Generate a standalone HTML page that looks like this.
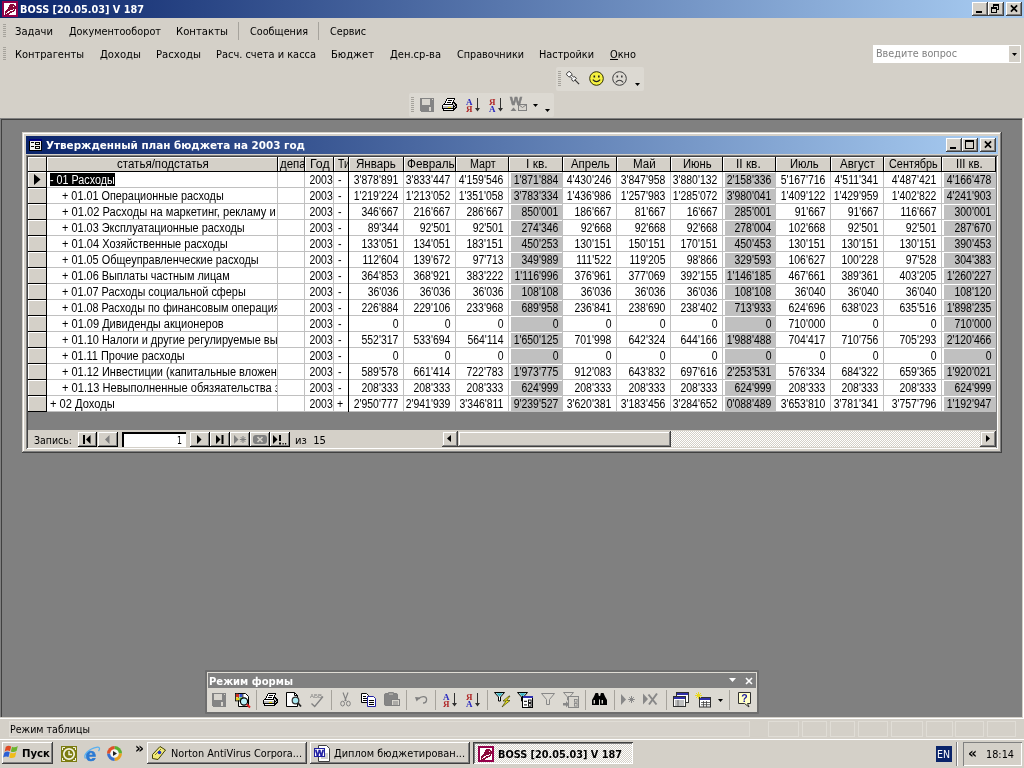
<!DOCTYPE html>
<html lang="ru"><head><meta charset="utf-8"><title>BOSS [20.05.03] V 187</title>
<style>
html,body{margin:0;padding:0}
body{width:1024px;height:768px;overflow:hidden;background:#d4d0c8;position:relative;font-family:"DejaVu Sans Condensed","Liberation Sans",sans-serif;font-size:11px;color:#000}
#root{position:absolute;left:0;top:0;width:1024px;height:768px;overflow:hidden;will-change:transform}
div{position:absolute;box-sizing:border-box;white-space:pre}
svg{position:absolute;overflow:visible}
.t,.tb,.g{height:14px;line-height:14px}
.t{font-family:"DejaVu Sans Condensed","Liberation Sans",sans-serif;font-size:11px}
.tb{font-family:"DejaVu Sans Condensed","Liberation Sans",sans-serif;font-size:11px;font-weight:bold}
.g{font-family:"Liberation Sans",sans-serif;font-size:12px;transform-origin:0 0}
.gr{transform-origin:100% 0}
.raised{background:#d4d0c8;box-shadow:inset -1px -1px 0 #404040,inset 1px 1px 0 #fff,inset -2px -2px 0 #808080}
.btn{background:#d4d0c8;box-shadow:inset -1px -1px 0 #000,inset 1px 1px 0 #fff,inset -2px -2px 0 #808080}
.sb{background:#d4d0c8;box-shadow:inset -1px -1px 0 #404040,inset 1px 1px 0 #d4d0c8,inset -2px -2px 0 #808080,inset 2px 2px 0 #fff}
.hd{background:#d4d0c8;box-shadow:inset 1px 1px 0 #fff;overflow:hidden}
.sunk{box-shadow:inset 1px 1px 0 #808080,inset -1px -1px 0 #fff}
.cell{overflow:hidden}
.grad{background:linear-gradient(90deg,#0a246a 0,#a6caf0 98%)}
.dith{background:repeating-conic-gradient(#fff 0 25%,#d4d0c8 0 50%) 0 0/2px 2px}
</style></head>
<body><div id="root">
<div class="grad" style="left:0px;top:0px;width:1024px;height:18px;"></div>
<div class="tb" style="left:19.5px;top:3px;transform-origin:0 0;transform:scaleX(0.9822);color:#fff;">BOSS [20.05.03] V 187</div>
<svg style="left:2px;top:1px" width="16" height="16" viewBox="0 0 16 16" shape-rendering="crispEdges"><rect x="0" y="0" width="16" height="1" fill="#95004a"/><rect x="0" y="1" width="16" height="1" fill="#95004a"/><rect x="0" y="2" width="2" height="1" fill="#95004a"/><rect x="2" y="2" width="12" height="1" fill="#fff"/><rect x="14" y="2" width="2" height="1" fill="#95004a"/><rect x="0" y="3" width="2" height="1" fill="#95004a"/><rect x="2" y="3" width="6" height="1" fill="#fff"/><rect x="8" y="3" width="4" height="1" fill="#8a0a3a"/><rect x="12" y="3" width="2" height="1" fill="#fff"/><rect x="14" y="3" width="2" height="1" fill="#95004a"/><rect x="0" y="4" width="2" height="1" fill="#95004a"/><rect x="2" y="4" width="5" height="1" fill="#fff"/><rect x="7" y="4" width="6" height="1" fill="#8a0a3a"/><rect x="13" y="4" width="1" height="1" fill="#fff"/><rect x="14" y="4" width="2" height="1" fill="#95004a"/><rect x="0" y="5" width="2" height="1" fill="#95004a"/><rect x="2" y="5" width="5" height="1" fill="#fff"/><rect x="7" y="5" width="4" height="1" fill="#8a0a3a"/><rect x="11" y="5" width="1" height="1" fill="#fff"/><rect x="12" y="5" width="2" height="1" fill="#8a0a3a"/><rect x="14" y="5" width="2" height="1" fill="#95004a"/><rect x="0" y="6" width="2" height="1" fill="#95004a"/><rect x="2" y="6" width="4" height="1" fill="#fff"/><rect x="6" y="6" width="8" height="1" fill="#8a0a3a"/><rect x="14" y="6" width="2" height="1" fill="#95004a"/><rect x="0" y="7" width="2" height="1" fill="#95004a"/><rect x="2" y="7" width="4" height="1" fill="#fff"/><rect x="6" y="7" width="8" height="1" fill="#8a0a3a"/><rect x="14" y="7" width="2" height="1" fill="#95004a"/><rect x="0" y="8" width="2" height="1" fill="#95004a"/><rect x="2" y="8" width="3" height="1" fill="#fff"/><rect x="5" y="8" width="6" height="1" fill="#8a0a3a"/><rect x="11" y="8" width="1" height="1" fill="#fff"/><rect x="12" y="8" width="1" height="1" fill="#8a0a3a"/><rect x="13" y="8" width="1" height="1" fill="#fff"/><rect x="14" y="8" width="2" height="1" fill="#95004a"/><rect x="0" y="9" width="2" height="1" fill="#95004a"/><rect x="2" y="9" width="2" height="1" fill="#fff"/><rect x="4" y="9" width="4" height="1" fill="#8a0a3a"/><rect x="8" y="9" width="3" height="1" fill="#fff"/><rect x="11" y="9" width="2" height="1" fill="#8a0a3a"/><rect x="13" y="9" width="1" height="1" fill="#fff"/><rect x="14" y="9" width="2" height="1" fill="#95004a"/><rect x="0" y="10" width="2" height="1" fill="#95004a"/><rect x="2" y="10" width="1" height="1" fill="#fff"/><rect x="3" y="10" width="3" height="1" fill="#8a0a3a"/><rect x="6" y="10" width="2" height="1" fill="#fff"/><rect x="8" y="10" width="4" height="1" fill="#8a0a3a"/><rect x="12" y="10" width="2" height="1" fill="#fff"/><rect x="14" y="10" width="2" height="1" fill="#95004a"/><rect x="0" y="11" width="2" height="1" fill="#95004a"/><rect x="2" y="11" width="1" height="1" fill="#fff"/><rect x="3" y="11" width="2" height="1" fill="#8a0a3a"/><rect x="5" y="11" width="2" height="1" fill="#fff"/><rect x="7" y="11" width="3" height="1" fill="#8a0a3a"/><rect x="10" y="11" width="4" height="1" fill="#fff"/><rect x="14" y="11" width="2" height="1" fill="#95004a"/><rect x="0" y="12" width="2" height="1" fill="#95004a"/><rect x="2" y="12" width="1" height="1" fill="#fff"/><rect x="3" y="12" width="1" height="1" fill="#8a0a3a"/><rect x="4" y="12" width="1" height="1" fill="#fff"/><rect x="5" y="12" width="3" height="1" fill="#8a0a3a"/><rect x="8" y="12" width="6" height="1" fill="#fff"/><rect x="14" y="12" width="2" height="1" fill="#95004a"/><rect x="0" y="13" width="2" height="1" fill="#95004a"/><rect x="2" y="13" width="1" height="1" fill="#fff"/><rect x="3" y="13" width="4" height="1" fill="#8a0a3a"/><rect x="7" y="13" width="7" height="1" fill="#fff"/><rect x="14" y="13" width="2" height="1" fill="#95004a"/><rect x="0" y="14" width="16" height="1" fill="#95004a"/><rect x="0" y="15" width="16" height="1" fill="#95004a"/></svg>
<div class="raised" style="left:972px;top:2px;width:16px;height:14px;"></div>
<div class="raised" style="left:988px;top:2px;width:16px;height:14px;"></div>
<div class="raised" style="left:1006px;top:2px;width:16px;height:14px;"></div>
<div style="left:976px;top:11px;width:6px;height:2px;background:#000"></div>
<div style="left:993px;top:4px;width:6px;height:6px;border:1px solid #000;border-top-width:2px"></div>
<div style="left:991px;top:7px;width:6px;height:6px;border:1px solid #000;border-top-width:2px;background:#d4d0c8"></div>
<svg style="left:1010px;top:5px" width="8" height="7"><path d="M.9 .3L7.100 6.700M7.100 .3L.9 6.700" stroke="#000" stroke-width="1.700" fill="none"/></svg>
<div style="left:3px;top:24px;width:3px;height:14px;background:repeating-linear-gradient(180deg,#a5a29b 0,#a5a29b 1px,transparent 1px,transparent 2px)"></div>
<div style="left:3px;top:47px;width:3px;height:14px;background:repeating-linear-gradient(180deg,#a5a29b 0,#a5a29b 1px,transparent 1px,transparent 2px)"></div>
<div class="t" style="left:14.5px;top:25px;transform-origin:0 0;transform:scaleX(1.0108);">Задачи</div>
<div class="t" style="left:68.5px;top:25px;transform-origin:0 0;transform:scaleX(0.9810);">Документооборот</div>
<div class="t" style="left:175.5px;top:25px;transform-origin:0 0;transform:scaleX(1.0209);">Контакты</div>
<div class="t" style="left:249.5px;top:25px;transform-origin:0 0;transform:scaleX(0.9766);">Сообщения</div>
<div class="t" style="left:329.5px;top:25px;transform-origin:0 0;transform:scaleX(0.9730);">Сервис</div>
<div style="left:238px;top:22px;width:1px;height:18px;background:#a6a39c"></div>
<div style="left:318px;top:22px;width:1px;height:18px;background:#a6a39c"></div>
<div class="t" style="left:14.5px;top:48px;transform-origin:0 0;transform:scaleX(0.9998);">Контрагенты</div>
<div class="t" style="left:99.5px;top:48px;transform-origin:0 0;transform:scaleX(1.0159);">Доходы</div>
<div class="t" style="left:155.5px;top:48px;transform-origin:0 0;transform:scaleX(1.0216);">Расходы</div>
<div class="t" style="left:215.5px;top:48px;transform-origin:0 0;transform:scaleX(0.9949);">Расч. счета и касса</div>
<div class="t" style="left:330.5px;top:48px;transform-origin:0 0;transform:scaleX(1.0062);">Бюджет</div>
<div class="t" style="left:389.5px;top:48px;transform-origin:0 0;transform:scaleX(1.0071);">Ден.ср-ва</div>
<div class="t" style="left:456.5px;top:48px;transform-origin:0 0;transform:scaleX(0.9741);">Справочники</div>
<div class="t" style="left:538.5px;top:48px;transform-origin:0 0;transform:scaleX(0.9841);">Настройки</div>
<div class="t" style="left:609.5px;top:48px;transform-origin:0 0;transform:scaleX(0.9887);">Окно</div>
<div style="left:610px;top:59px;width:8px;height:1px;background:#000"></div>
<div style="left:873px;top:45px;width:148px;height:18px;background:#fff"></div>
<div class="t" style="left:875.5px;top:47px;transform-origin:0 0;transform:scaleX(0.9744);color:#808080">Введите вопрос</div>
<div style="left:1009px;top:46px;width:11px;height:16px;background:#d4d0c8"></div>
<svg style="left:1012px;top:53px" width="5" height="3"><path d="M0 0h5L2.5 3z" fill="#000"/></svg>
<div style="left:556px;top:67px;width:88px;height:24px;background:#dcd9d2;border-radius:2px"></div>
<div style="left:558px;top:71px;width:3px;height:15px;background:repeating-linear-gradient(180deg,#a5a29b 0,#a5a29b 1px,transparent 1px,transparent 2px)"></div>
<svg style="left:567px;top:72px" width="14" height="14"><g transform="rotate(45 2 2)"><rect x="0" y="-.2" width="4.600" height="4.400" rx="1.200" fill="#fff" stroke="#303030" stroke-width=".9"/><path d="M4.600 1h2.500l1-1.200h2.200v4.400H8.100l-1-1.200H4.600z" fill="#fff" stroke="#303030" stroke-width=".9"/><path d="M10.300 2h6" stroke="#303030" stroke-width="1.1"/></g></svg>
<svg style="left:589px;top:71px" width="15" height="15"><circle cx="7.5" cy="7.5" r="6.8" fill="#f4f040" stroke="#303000" stroke-width="1"/><rect x="4.5" y="4.5" width="1.6" height="2" fill="#202020"/><rect x="9" y="4.5" width="1.6" height="2" fill="#202020"/><path d="M3.8 8.6q3.7 4 7.4 0" fill="none" stroke="#202020" stroke-width="1.1"/></svg>
<svg style="left:612px;top:71px" width="15" height="15"><circle cx="7.5" cy="7.5" r="6.8" fill="none" stroke="#404040" stroke-width="1"/><rect x="4.5" y="4.5" width="1.6" height="2" fill="#404040"/><rect x="9" y="4.5" width="1.6" height="2" fill="#404040"/><path d="M3.8 11.4q3.7 -4.4 7.4 0" fill="none" stroke="#404040" stroke-width="1.1"/></svg>
<svg style="left:635px;top:83px" width="5" height="3"><path d="M0 0h5L2.5 3z" fill="#000"/></svg>
<div style="left:409px;top:93px;width:145px;height:24px;background:#dcd9d2;border-radius:2px"></div>
<div style="left:411px;top:97px;width:3px;height:15px;background:repeating-linear-gradient(180deg,#a5a29b 0,#a5a29b 1px,transparent 1px,transparent 2px)"></div>
<svg style="left:420px;top:98px" width="14" height="14" viewBox="0 0 14 14" shape-rendering="crispEdges"><rect x="0" y="0" width="14" height="1" fill="#848484"/><rect x="0" y="1" width="2" height="1" fill="#848484"/><rect x="2" y="1" width="8" height="1" fill="#d8d5ce"/><rect x="10" y="1" width="2" height="1" fill="#848484"/><rect x="12" y="1" width="1" height="1" fill="#d8d5ce"/><rect x="13" y="1" width="1" height="1" fill="#848484"/><rect x="0" y="2" width="2" height="1" fill="#848484"/><rect x="2" y="2" width="8" height="1" fill="#d8d5ce"/><rect x="10" y="2" width="4" height="1" fill="#848484"/><rect x="0" y="3" width="2" height="1" fill="#848484"/><rect x="2" y="3" width="8" height="1" fill="#d8d5ce"/><rect x="10" y="3" width="4" height="1" fill="#848484"/><rect x="0" y="4" width="2" height="1" fill="#848484"/><rect x="2" y="4" width="8" height="1" fill="#d8d5ce"/><rect x="10" y="4" width="4" height="1" fill="#848484"/><rect x="0" y="5" width="2" height="1" fill="#848484"/><rect x="2" y="5" width="8" height="1" fill="#d8d5ce"/><rect x="10" y="5" width="4" height="1" fill="#848484"/><rect x="0" y="6" width="2" height="1" fill="#848484"/><rect x="2" y="6" width="8" height="1" fill="#d8d5ce"/><rect x="10" y="6" width="4" height="1" fill="#848484"/><rect x="0" y="7" width="14" height="1" fill="#848484"/><rect x="0" y="8" width="14" height="1" fill="#848484"/><rect x="0" y="9" width="9" height="1" fill="#848484"/><rect x="9" y="9" width="2" height="1" fill="#d8d5ce"/><rect x="11" y="9" width="3" height="1" fill="#848484"/><rect x="0" y="10" width="9" height="1" fill="#848484"/><rect x="9" y="10" width="2" height="1" fill="#d8d5ce"/><rect x="11" y="10" width="3" height="1" fill="#848484"/><rect x="0" y="11" width="9" height="1" fill="#848484"/><rect x="9" y="11" width="2" height="1" fill="#d8d5ce"/><rect x="11" y="11" width="3" height="1" fill="#848484"/><rect x="0" y="12" width="9" height="1" fill="#848484"/><rect x="9" y="12" width="2" height="1" fill="#d8d5ce"/><rect x="11" y="12" width="3" height="1" fill="#848484"/><rect x="1" y="13" width="13" height="1" fill="#848484"/></svg>
<svg style="left:442px;top:97px" width="16" height="16" viewBox="0 0 16 16" shape-rendering="crispEdges"><rect x="5" y="1" width="8" height="1" fill="#000"/><rect x="4" y="2" width="1" height="1" fill="#000"/><rect x="5" y="2" width="7" height="1" fill="#fff"/><rect x="12" y="2" width="1" height="1" fill="#000"/><rect x="4" y="3" width="1" height="1" fill="#000"/><rect x="5" y="3" width="1" height="1" fill="#fff"/><rect x="6" y="3" width="4" height="1" fill="#000"/><rect x="10" y="3" width="1" height="1" fill="#fff"/><rect x="11" y="3" width="1" height="1" fill="#000"/><rect x="3" y="4" width="1" height="1" fill="#000"/><rect x="4" y="4" width="7" height="1" fill="#fff"/><rect x="11" y="4" width="1" height="1" fill="#000"/><rect x="3" y="5" width="1" height="1" fill="#000"/><rect x="4" y="5" width="1" height="1" fill="#fff"/><rect x="5" y="5" width="4" height="1" fill="#000"/><rect x="9" y="5" width="1" height="1" fill="#fff"/><rect x="10" y="5" width="3" height="1" fill="#000"/><rect x="2" y="6" width="1" height="1" fill="#000"/><rect x="3" y="6" width="7" height="1" fill="#fff"/><rect x="10" y="6" width="1" height="1" fill="#000"/><rect x="11" y="6" width="1" height="1" fill="#c0c0c0"/><rect x="12" y="6" width="2" height="1" fill="#000"/><rect x="1" y="7" width="10" height="1" fill="#000"/><rect x="11" y="7" width="2" height="1" fill="#c0c0c0"/><rect x="13" y="7" width="2" height="1" fill="#000"/><rect x="0" y="8" width="1" height="1" fill="#000"/><rect x="1" y="8" width="10" height="1" fill="#fff"/><rect x="11" y="8" width="1" height="1" fill="#000"/><rect x="12" y="8" width="1" height="1" fill="#c0c0c0"/><rect x="13" y="8" width="2" height="1" fill="#000"/><rect x="0" y="9" width="1" height="1" fill="#000"/><rect x="1" y="9" width="10" height="1" fill="#c0c0c0"/><rect x="11" y="9" width="2" height="1" fill="#000"/><rect x="13" y="9" width="1" height="1" fill="#c0c0c0"/><rect x="14" y="9" width="1" height="1" fill="#000"/><rect x="0" y="10" width="1" height="1" fill="#000"/><rect x="1" y="10" width="5" height="1" fill="#c0c0c0"/><rect x="6" y="10" width="3" height="1" fill="#f0e000"/><rect x="9" y="10" width="2" height="1" fill="#c0c0c0"/><rect x="11" y="10" width="1" height="1" fill="#000"/><rect x="12" y="10" width="1" height="1" fill="#c0c0c0"/><rect x="13" y="10" width="2" height="1" fill="#000"/><rect x="0" y="11" width="14" height="1" fill="#000"/><rect x="1" y="12" width="1" height="1" fill="#000"/><rect x="2" y="12" width="9" height="1" fill="#fff"/><rect x="11" y="12" width="2" height="1" fill="#000"/><rect x="1" y="13" width="11" height="1" fill="#000"/></svg>
<svg style="left:465px;top:97px" width="16" height="16"><text x="1" y="7.500" font-family="Liberation Serif,serif" font-weight="bold" font-size="9" fill="#2828c0">А</text><text x="1" y="15" font-family="Liberation Serif,serif" font-weight="bold" font-size="9" fill="#b02828">Я</text><path d="M12 1h1v10h2l-2.500 3.500L10 11h2z" fill="#303030"/></svg>
<svg style="left:488px;top:97px" width="16" height="16"><text x="1" y="7.500" font-family="Liberation Serif,serif" font-weight="bold" font-size="9" fill="#b02828">Я</text><text x="1" y="15" font-family="Liberation Serif,serif" font-weight="bold" font-size="9" fill="#2828c0">А</text><path d="M12 1h1v10h2l-2.500 3.500L10 11h2z" fill="#303030"/></svg>
<svg style="left:510px;top:97px" width="18" height="16"><text x="0" y="8" font-family="Liberation Sans,sans-serif" font-weight="bold" font-size="10.500" fill="#808080" stroke="#808080" stroke-width=".5" textLength="12" lengthAdjust="spacingAndGlyphs">W</text><rect x="8.500" y="7.500" width="8" height="6" fill="#d8d5ce" stroke="#808080"/><path d="M8.500 7.500l4 3 4-3" fill="none" stroke="#808080"/><path d="M.5 14l3-3.500 3 3.500z" fill="#808080"/></svg>
<svg style="left:533px;top:104px" width="5" height="3"><path d="M0 0h5L2.5 3z" fill="#000"/></svg>
<svg style="left:545px;top:109px" width="5" height="3"><path d="M0 0h5L2.5 3z" fill="#000"/></svg>
<div style="left:0px;top:118px;width:1022px;height:599px;background:#808080"></div>
<div style="left:1px;top:119px;width:1021px;height:1px;background:#404040"></div>
<div style="left:1px;top:119px;width:1px;height:598px;background:#404040"></div>
<div style="left:1023px;top:118px;width:1px;height:601px;background:#fff"></div>
<div style="left:0px;top:718px;width:1024px;height:1px;background:#fff"></div>
<div style="left:22px;top:132px;width:980px;height:321px;background:#d4d0c8;box-shadow:inset -1px -1px 0 #404040,inset 1px 1px 0 #d4d0c8,inset -2px -2px 0 #808080,inset 2px 2px 0 #fff"></div>
<div class="grad" style="left:26px;top:136px;width:972px;height:18px;"></div>
<div class="tb" style="left:45.5px;top:139px;transform-origin:0 0;transform:scaleX(1.0490);color:#fff;">Утвержденный план бюджета на 2003 год</div>
<svg style="left:29px;top:139px" width="13" height="12" viewBox="0 0 13 12" shape-rendering="crispEdges"><rect x="0" y="0" width="13" height="1" fill="#000080"/><rect x="0" y="1" width="13" height="1" fill="#000080"/><rect x="0" y="2" width="1" height="1" fill="#000"/><rect x="1" y="2" width="11" height="1" fill="#f0f0f0"/><rect x="12" y="2" width="1" height="1" fill="#000"/><rect x="0" y="3" width="1" height="1" fill="#000"/><rect x="1" y="3" width="1" height="1" fill="#f0f0f0"/><rect x="2" y="3" width="3" height="1" fill="#000"/><rect x="5" y="3" width="1" height="1" fill="#f0f0f0"/><rect x="6" y="3" width="5" height="1" fill="#000"/><rect x="11" y="3" width="1" height="1" fill="#f0f0f0"/><rect x="12" y="3" width="1" height="1" fill="#000"/><rect x="0" y="4" width="1" height="1" fill="#000"/><rect x="1" y="4" width="5" height="1" fill="#f0f0f0"/><rect x="6" y="4" width="1" height="1" fill="#000"/><rect x="7" y="4" width="3" height="1" fill="#f0f0f0"/><rect x="10" y="4" width="1" height="1" fill="#000"/><rect x="11" y="4" width="1" height="1" fill="#f0f0f0"/><rect x="12" y="4" width="1" height="1" fill="#000"/><rect x="0" y="5" width="1" height="1" fill="#000"/><rect x="1" y="5" width="5" height="1" fill="#f0f0f0"/><rect x="6" y="5" width="5" height="1" fill="#000"/><rect x="11" y="5" width="1" height="1" fill="#f0f0f0"/><rect x="12" y="5" width="1" height="1" fill="#000"/><rect x="0" y="6" width="1" height="1" fill="#000"/><rect x="1" y="6" width="11" height="1" fill="#f0f0f0"/><rect x="12" y="6" width="1" height="1" fill="#000"/><rect x="0" y="7" width="1" height="1" fill="#000"/><rect x="1" y="7" width="1" height="1" fill="#f0f0f0"/><rect x="2" y="7" width="3" height="1" fill="#000"/><rect x="5" y="7" width="1" height="1" fill="#f0f0f0"/><rect x="6" y="7" width="5" height="1" fill="#000"/><rect x="11" y="7" width="1" height="1" fill="#f0f0f0"/><rect x="12" y="7" width="1" height="1" fill="#000"/><rect x="0" y="8" width="1" height="1" fill="#000"/><rect x="1" y="8" width="5" height="1" fill="#f0f0f0"/><rect x="6" y="8" width="1" height="1" fill="#000"/><rect x="7" y="8" width="3" height="1" fill="#f0f0f0"/><rect x="10" y="8" width="1" height="1" fill="#000"/><rect x="11" y="8" width="1" height="1" fill="#f0f0f0"/><rect x="12" y="8" width="1" height="1" fill="#000"/><rect x="0" y="9" width="1" height="1" fill="#000"/><rect x="1" y="9" width="5" height="1" fill="#f0f0f0"/><rect x="6" y="9" width="5" height="1" fill="#000"/><rect x="11" y="9" width="1" height="1" fill="#f0f0f0"/><rect x="12" y="9" width="1" height="1" fill="#000"/><rect x="0" y="10" width="1" height="1" fill="#000"/><rect x="1" y="10" width="11" height="1" fill="#f0f0f0"/><rect x="12" y="10" width="1" height="1" fill="#000"/><rect x="0" y="11" width="13" height="1" fill="#000"/></svg>
<div class="raised" style="left:946px;top:138px;width:16px;height:14px;"></div>
<div class="raised" style="left:962px;top:138px;width:16px;height:14px;"></div>
<div class="raised" style="left:980px;top:138px;width:16px;height:14px;"></div>
<div style="left:950px;top:147px;width:6px;height:2px;background:#000"></div>
<div style="left:965px;top:140px;width:9px;height:9px;border:1px solid #000;border-top-width:2px"></div>
<svg style="left:984px;top:141px" width="8" height="7"><path d="M.9 .3L7.100 6.700M7.100 .3L.9 6.700" stroke="#000" stroke-width="1.700" fill="none"/></svg>
<div style="left:26px;top:155px;width:972px;height:294px;background:#808080;box-shadow:inset 1px 1px 0 #808080,inset -1px -1px 0 #fff,inset 2px 2px 0 #404040"></div>
<div style="left:28px;top:172px;width:968px;height:240px;background:#fff"></div>
<div style="left:28px;top:157px;width:968px;height:15px;background:#000"></div>
<div class="hd" style="left:28px;top:157px;width:18px;height:14px;"></div>
<div class="hd" style="left:47px;top:157px;width:230px;height:14px;"><div class="g" style="left:69.8px;top:0px;transform:scaleX(0.9624)">статья/подстатья</div></div>
<div class="hd" style="left:278px;top:157px;width:26px;height:14px;"><div class="g" style="left:1.8px;top:0px;transform:scaleX(0.9568)">департамент</div></div>
<div class="hd" style="left:305px;top:157px;width:28px;height:14px;"><div class="g" style="left:4.8px;top:0px;transform:scaleX(1.0309)">Год</div></div>
<div class="hd" style="left:334px;top:157px;width:14px;height:14px;"><div class="g" style="left:3.8px;top:0px;transform:scaleX(0.8657)">Тип</div></div>
<div class="hd" style="left:349px;top:157px;width:54px;height:14px;"><div class="g" style="left:6.8px;top:0px;transform:scaleX(0.9650)">Январь</div></div>
<div class="hd" style="left:404px;top:157px;width:51px;height:14px;"><div class="g" style="left:2.8px;top:0px;transform:scaleX(0.9778)">Февраль</div></div>
<div class="hd" style="left:456px;top:157px;width:52px;height:14px;"><div class="g" style="left:13.8px;top:0px;transform:scaleX(0.8949)">Март</div></div>
<div class="hd" style="left:509px;top:157px;width:53px;height:14px;"><div class="g" style="left:16.8px;top:0px;transform:scaleX(1.0027)">I кв.</div></div>
<div class="hd" style="left:563px;top:157px;width:53px;height:14px;"><div class="g" style="left:7.8px;top:0px;transform:scaleX(0.9504)">Апрель</div></div>
<div class="hd" style="left:617px;top:157px;width:53px;height:14px;"><div class="g" style="left:15.8px;top:0px;transform:scaleX(0.9653)">Май</div></div>
<div class="hd" style="left:671px;top:157px;width:51px;height:14px;"><div class="g" style="left:11.8px;top:0px;transform:scaleX(0.9405)">Июнь</div></div>
<div class="hd" style="left:723px;top:157px;width:52px;height:14px;"><div class="g" style="left:12.8px;top:0px;transform:scaleX(0.9892)">II кв.</div></div>
<div class="hd" style="left:776px;top:157px;width:54px;height:14px;"><div class="g" style="left:13.8px;top:0px;transform:scaleX(0.9371)">Июль</div></div>
<div class="hd" style="left:831px;top:157px;width:52px;height:14px;"><div class="g" style="left:8.8px;top:0px;transform:scaleX(0.9606)">Август</div></div>
<div class="hd" style="left:884px;top:157px;width:57px;height:14px;"><div class="g" style="left:4.8px;top:0px;transform:scaleX(0.9058)">Сентябрь</div></div>
<div class="hd" style="left:942px;top:157px;width:53px;height:14px;"><div class="g" style="left:13.8px;top:0px;transform:scaleX(0.9436)">III кв.</div></div>
<div class="hd" style="left:28px;top:172px;width:18px;height:15px;"></div>
<div style="left:28px;top:187px;width:18px;height:1px;background:#000"></div>
<div style="left:50px;top:173px;width:65px;height:13px;background:#000"></div>
<div class="cell" style="left:47px;top:172px;width:230px;height:15px;"><div class="g" style="left:2.8px;top:1px;color:#fff;transform:scaleX(0.8961)">- 01 Расходы</div></div>
<div class="cell" style="left:305px;top:172px;width:28px;height:15px;"><div class="g gr" style="right:0.5px;top:1px;transform:scaleX(.87)">2003</div></div>
<div class="cell" style="left:334px;top:172px;width:14px;height:15px;"><div class="g" style="left:3.8px;top:1px;transform:scaleX(0.8850)">-</div></div>
<div class="cell" style="left:351px;top:172px;width:52px;height:15px;"><div class="g gr" style="right:4.5px;top:1px;transform:scaleX(.87)">3&#x27;878&#x27;891</div></div>
<div class="cell" style="left:406px;top:172px;width:49px;height:15px;"><div class="g gr" style="right:4.5px;top:1px;transform:scaleX(.87)">3&#x27;833&#x27;447</div></div>
<div class="cell" style="left:458px;top:172px;width:50px;height:15px;"><div class="g gr" style="right:4.5px;top:1px;transform:scaleX(.87)">4&#x27;159&#x27;546</div></div>
<div style="left:511px;top:173px;width:51px;height:14px;background:#c0c0c0"></div>
<div class="cell" style="left:511px;top:172px;width:51px;height:15px;"><div class="g gr" style="right:3.5px;top:1px;transform:scaleX(.87)">1&#x27;871&#x27;884</div></div>
<div class="cell" style="left:565px;top:172px;width:51px;height:15px;"><div class="g gr" style="right:4.5px;top:1px;transform:scaleX(.87)">4&#x27;430&#x27;246</div></div>
<div class="cell" style="left:619px;top:172px;width:51px;height:15px;"><div class="g gr" style="right:4.5px;top:1px;transform:scaleX(.87)">3&#x27;847&#x27;958</div></div>
<div class="cell" style="left:673px;top:172px;width:49px;height:15px;"><div class="g gr" style="right:4.5px;top:1px;transform:scaleX(.87)">3&#x27;880&#x27;132</div></div>
<div style="left:725px;top:173px;width:50px;height:14px;background:#c0c0c0"></div>
<div class="cell" style="left:725px;top:172px;width:50px;height:15px;"><div class="g gr" style="right:3.5px;top:1px;transform:scaleX(.87)">2&#x27;158&#x27;336</div></div>
<div class="cell" style="left:778px;top:172px;width:52px;height:15px;"><div class="g gr" style="right:4.5px;top:1px;transform:scaleX(.87)">5&#x27;167&#x27;716</div></div>
<div class="cell" style="left:833px;top:172px;width:50px;height:15px;"><div class="g gr" style="right:4.5px;top:1px;transform:scaleX(.87)">4&#x27;511&#x27;341</div></div>
<div class="cell" style="left:886px;top:172px;width:55px;height:15px;"><div class="g gr" style="right:4.5px;top:1px;transform:scaleX(.87)">4&#x27;487&#x27;421</div></div>
<div style="left:944px;top:173px;width:51px;height:14px;background:#c0c0c0"></div>
<div class="cell" style="left:944px;top:172px;width:51px;height:15px;"><div class="g gr" style="right:3.5px;top:1px;transform:scaleX(.87)">4&#x27;166&#x27;478</div></div>
<div style="left:47px;top:187px;width:948px;height:1px;background:#c0c0c0"></div>
<div class="hd" style="left:28px;top:188px;width:18px;height:15px;"></div>
<div style="left:28px;top:203px;width:18px;height:1px;background:#000"></div>
<div class="cell" style="left:47px;top:188px;width:230px;height:15px;"><div class="g" style="left:14.8px;top:1px;transform:scaleX(0.9036)">+ 01.01 Операционные расходы</div></div>
<div class="cell" style="left:305px;top:188px;width:28px;height:15px;"><div class="g gr" style="right:0.5px;top:1px;transform:scaleX(.87)">2003</div></div>
<div class="cell" style="left:334px;top:188px;width:14px;height:15px;"><div class="g" style="left:3.8px;top:1px;transform:scaleX(0.8850)">-</div></div>
<div class="cell" style="left:351px;top:188px;width:52px;height:15px;"><div class="g gr" style="right:4.5px;top:1px;transform:scaleX(.87)">1&#x27;219&#x27;224</div></div>
<div class="cell" style="left:406px;top:188px;width:49px;height:15px;"><div class="g gr" style="right:4.5px;top:1px;transform:scaleX(.87)">1&#x27;213&#x27;052</div></div>
<div class="cell" style="left:458px;top:188px;width:50px;height:15px;"><div class="g gr" style="right:4.5px;top:1px;transform:scaleX(.87)">1&#x27;351&#x27;058</div></div>
<div style="left:511px;top:189px;width:51px;height:14px;background:#c0c0c0"></div>
<div class="cell" style="left:511px;top:188px;width:51px;height:15px;"><div class="g gr" style="right:3.5px;top:1px;transform:scaleX(.87)">3&#x27;783&#x27;334</div></div>
<div class="cell" style="left:565px;top:188px;width:51px;height:15px;"><div class="g gr" style="right:4.5px;top:1px;transform:scaleX(.87)">1&#x27;436&#x27;986</div></div>
<div class="cell" style="left:619px;top:188px;width:51px;height:15px;"><div class="g gr" style="right:4.5px;top:1px;transform:scaleX(.87)">1&#x27;257&#x27;983</div></div>
<div class="cell" style="left:673px;top:188px;width:49px;height:15px;"><div class="g gr" style="right:4.5px;top:1px;transform:scaleX(.87)">1&#x27;285&#x27;072</div></div>
<div style="left:725px;top:189px;width:50px;height:14px;background:#c0c0c0"></div>
<div class="cell" style="left:725px;top:188px;width:50px;height:15px;"><div class="g gr" style="right:3.5px;top:1px;transform:scaleX(.87)">3&#x27;980&#x27;041</div></div>
<div class="cell" style="left:778px;top:188px;width:52px;height:15px;"><div class="g gr" style="right:4.5px;top:1px;transform:scaleX(.87)">1&#x27;409&#x27;122</div></div>
<div class="cell" style="left:833px;top:188px;width:50px;height:15px;"><div class="g gr" style="right:4.5px;top:1px;transform:scaleX(.87)">1&#x27;429&#x27;959</div></div>
<div class="cell" style="left:886px;top:188px;width:55px;height:15px;"><div class="g gr" style="right:4.5px;top:1px;transform:scaleX(.87)">1&#x27;402&#x27;822</div></div>
<div style="left:944px;top:189px;width:51px;height:14px;background:#c0c0c0"></div>
<div class="cell" style="left:944px;top:188px;width:51px;height:15px;"><div class="g gr" style="right:3.5px;top:1px;transform:scaleX(.87)">4&#x27;241&#x27;903</div></div>
<div style="left:47px;top:203px;width:948px;height:1px;background:#c0c0c0"></div>
<div class="hd" style="left:28px;top:204px;width:18px;height:15px;"></div>
<div style="left:28px;top:219px;width:18px;height:1px;background:#000"></div>
<div class="cell" style="left:47px;top:204px;width:230px;height:15px;"><div class="g" style="left:14.8px;top:1px;transform:scaleX(0.9277)">+ 01.02 Расходы на маркетинг, рекламу и PR</div></div>
<div class="cell" style="left:305px;top:204px;width:28px;height:15px;"><div class="g gr" style="right:0.5px;top:1px;transform:scaleX(.87)">2003</div></div>
<div class="cell" style="left:334px;top:204px;width:14px;height:15px;"><div class="g" style="left:3.8px;top:1px;transform:scaleX(0.8850)">-</div></div>
<div class="cell" style="left:351px;top:204px;width:52px;height:15px;"><div class="g gr" style="right:4.5px;top:1px;transform:scaleX(.87)">346&#x27;667</div></div>
<div class="cell" style="left:406px;top:204px;width:49px;height:15px;"><div class="g gr" style="right:4.5px;top:1px;transform:scaleX(.87)">216&#x27;667</div></div>
<div class="cell" style="left:458px;top:204px;width:50px;height:15px;"><div class="g gr" style="right:4.5px;top:1px;transform:scaleX(.87)">286&#x27;667</div></div>
<div style="left:511px;top:205px;width:51px;height:14px;background:#c0c0c0"></div>
<div class="cell" style="left:511px;top:204px;width:51px;height:15px;"><div class="g gr" style="right:3.5px;top:1px;transform:scaleX(.87)">850&#x27;001</div></div>
<div class="cell" style="left:565px;top:204px;width:51px;height:15px;"><div class="g gr" style="right:4.5px;top:1px;transform:scaleX(.87)">186&#x27;667</div></div>
<div class="cell" style="left:619px;top:204px;width:51px;height:15px;"><div class="g gr" style="right:4.5px;top:1px;transform:scaleX(.87)">81&#x27;667</div></div>
<div class="cell" style="left:673px;top:204px;width:49px;height:15px;"><div class="g gr" style="right:4.5px;top:1px;transform:scaleX(.87)">16&#x27;667</div></div>
<div style="left:725px;top:205px;width:50px;height:14px;background:#c0c0c0"></div>
<div class="cell" style="left:725px;top:204px;width:50px;height:15px;"><div class="g gr" style="right:3.5px;top:1px;transform:scaleX(.87)">285&#x27;001</div></div>
<div class="cell" style="left:778px;top:204px;width:52px;height:15px;"><div class="g gr" style="right:4.5px;top:1px;transform:scaleX(.87)">91&#x27;667</div></div>
<div class="cell" style="left:833px;top:204px;width:50px;height:15px;"><div class="g gr" style="right:4.5px;top:1px;transform:scaleX(.87)">91&#x27;667</div></div>
<div class="cell" style="left:886px;top:204px;width:55px;height:15px;"><div class="g gr" style="right:4.5px;top:1px;transform:scaleX(.87)">116&#x27;667</div></div>
<div style="left:944px;top:205px;width:51px;height:14px;background:#c0c0c0"></div>
<div class="cell" style="left:944px;top:204px;width:51px;height:15px;"><div class="g gr" style="right:3.5px;top:1px;transform:scaleX(.87)">300&#x27;001</div></div>
<div style="left:47px;top:219px;width:948px;height:1px;background:#c0c0c0"></div>
<div class="hd" style="left:28px;top:220px;width:18px;height:15px;"></div>
<div style="left:28px;top:235px;width:18px;height:1px;background:#000"></div>
<div class="cell" style="left:47px;top:220px;width:230px;height:15px;"><div class="g" style="left:14.8px;top:1px;transform:scaleX(0.9093)">+ 01.03 Эксплуатационные расходы</div></div>
<div class="cell" style="left:305px;top:220px;width:28px;height:15px;"><div class="g gr" style="right:0.5px;top:1px;transform:scaleX(.87)">2003</div></div>
<div class="cell" style="left:334px;top:220px;width:14px;height:15px;"><div class="g" style="left:3.8px;top:1px;transform:scaleX(0.8850)">-</div></div>
<div class="cell" style="left:351px;top:220px;width:52px;height:15px;"><div class="g gr" style="right:4.5px;top:1px;transform:scaleX(.87)">89&#x27;344</div></div>
<div class="cell" style="left:406px;top:220px;width:49px;height:15px;"><div class="g gr" style="right:4.5px;top:1px;transform:scaleX(.87)">92&#x27;501</div></div>
<div class="cell" style="left:458px;top:220px;width:50px;height:15px;"><div class="g gr" style="right:4.5px;top:1px;transform:scaleX(.87)">92&#x27;501</div></div>
<div style="left:511px;top:221px;width:51px;height:14px;background:#c0c0c0"></div>
<div class="cell" style="left:511px;top:220px;width:51px;height:15px;"><div class="g gr" style="right:3.5px;top:1px;transform:scaleX(.87)">274&#x27;346</div></div>
<div class="cell" style="left:565px;top:220px;width:51px;height:15px;"><div class="g gr" style="right:4.5px;top:1px;transform:scaleX(.87)">92&#x27;668</div></div>
<div class="cell" style="left:619px;top:220px;width:51px;height:15px;"><div class="g gr" style="right:4.5px;top:1px;transform:scaleX(.87)">92&#x27;668</div></div>
<div class="cell" style="left:673px;top:220px;width:49px;height:15px;"><div class="g gr" style="right:4.5px;top:1px;transform:scaleX(.87)">92&#x27;668</div></div>
<div style="left:725px;top:221px;width:50px;height:14px;background:#c0c0c0"></div>
<div class="cell" style="left:725px;top:220px;width:50px;height:15px;"><div class="g gr" style="right:3.5px;top:1px;transform:scaleX(.87)">278&#x27;004</div></div>
<div class="cell" style="left:778px;top:220px;width:52px;height:15px;"><div class="g gr" style="right:4.5px;top:1px;transform:scaleX(.87)">102&#x27;668</div></div>
<div class="cell" style="left:833px;top:220px;width:50px;height:15px;"><div class="g gr" style="right:4.5px;top:1px;transform:scaleX(.87)">92&#x27;501</div></div>
<div class="cell" style="left:886px;top:220px;width:55px;height:15px;"><div class="g gr" style="right:4.5px;top:1px;transform:scaleX(.87)">92&#x27;501</div></div>
<div style="left:944px;top:221px;width:51px;height:14px;background:#c0c0c0"></div>
<div class="cell" style="left:944px;top:220px;width:51px;height:15px;"><div class="g gr" style="right:3.5px;top:1px;transform:scaleX(.87)">287&#x27;670</div></div>
<div style="left:47px;top:235px;width:948px;height:1px;background:#c0c0c0"></div>
<div class="hd" style="left:28px;top:236px;width:18px;height:15px;"></div>
<div style="left:28px;top:251px;width:18px;height:1px;background:#000"></div>
<div class="cell" style="left:47px;top:236px;width:230px;height:15px;"><div class="g" style="left:14.8px;top:1px;transform:scaleX(0.9186)">+ 01.04 Хозяйственные расходы</div></div>
<div class="cell" style="left:305px;top:236px;width:28px;height:15px;"><div class="g gr" style="right:0.5px;top:1px;transform:scaleX(.87)">2003</div></div>
<div class="cell" style="left:334px;top:236px;width:14px;height:15px;"><div class="g" style="left:3.8px;top:1px;transform:scaleX(0.8850)">-</div></div>
<div class="cell" style="left:351px;top:236px;width:52px;height:15px;"><div class="g gr" style="right:4.5px;top:1px;transform:scaleX(.87)">133&#x27;051</div></div>
<div class="cell" style="left:406px;top:236px;width:49px;height:15px;"><div class="g gr" style="right:4.5px;top:1px;transform:scaleX(.87)">134&#x27;051</div></div>
<div class="cell" style="left:458px;top:236px;width:50px;height:15px;"><div class="g gr" style="right:4.5px;top:1px;transform:scaleX(.87)">183&#x27;151</div></div>
<div style="left:511px;top:237px;width:51px;height:14px;background:#c0c0c0"></div>
<div class="cell" style="left:511px;top:236px;width:51px;height:15px;"><div class="g gr" style="right:3.5px;top:1px;transform:scaleX(.87)">450&#x27;253</div></div>
<div class="cell" style="left:565px;top:236px;width:51px;height:15px;"><div class="g gr" style="right:4.5px;top:1px;transform:scaleX(.87)">130&#x27;151</div></div>
<div class="cell" style="left:619px;top:236px;width:51px;height:15px;"><div class="g gr" style="right:4.5px;top:1px;transform:scaleX(.87)">150&#x27;151</div></div>
<div class="cell" style="left:673px;top:236px;width:49px;height:15px;"><div class="g gr" style="right:4.5px;top:1px;transform:scaleX(.87)">170&#x27;151</div></div>
<div style="left:725px;top:237px;width:50px;height:14px;background:#c0c0c0"></div>
<div class="cell" style="left:725px;top:236px;width:50px;height:15px;"><div class="g gr" style="right:3.5px;top:1px;transform:scaleX(.87)">450&#x27;453</div></div>
<div class="cell" style="left:778px;top:236px;width:52px;height:15px;"><div class="g gr" style="right:4.5px;top:1px;transform:scaleX(.87)">130&#x27;151</div></div>
<div class="cell" style="left:833px;top:236px;width:50px;height:15px;"><div class="g gr" style="right:4.5px;top:1px;transform:scaleX(.87)">130&#x27;151</div></div>
<div class="cell" style="left:886px;top:236px;width:55px;height:15px;"><div class="g gr" style="right:4.5px;top:1px;transform:scaleX(.87)">130&#x27;151</div></div>
<div style="left:944px;top:237px;width:51px;height:14px;background:#c0c0c0"></div>
<div class="cell" style="left:944px;top:236px;width:51px;height:15px;"><div class="g gr" style="right:3.5px;top:1px;transform:scaleX(.87)">390&#x27;453</div></div>
<div style="left:47px;top:251px;width:948px;height:1px;background:#c0c0c0"></div>
<div class="hd" style="left:28px;top:252px;width:18px;height:15px;"></div>
<div style="left:28px;top:267px;width:18px;height:1px;background:#000"></div>
<div class="cell" style="left:47px;top:252px;width:230px;height:15px;"><div class="g" style="left:14.8px;top:1px;transform:scaleX(0.9082)">+ 01.05 Общеуправленческие расходы</div></div>
<div class="cell" style="left:305px;top:252px;width:28px;height:15px;"><div class="g gr" style="right:0.5px;top:1px;transform:scaleX(.87)">2003</div></div>
<div class="cell" style="left:334px;top:252px;width:14px;height:15px;"><div class="g" style="left:3.8px;top:1px;transform:scaleX(0.8850)">-</div></div>
<div class="cell" style="left:351px;top:252px;width:52px;height:15px;"><div class="g gr" style="right:4.5px;top:1px;transform:scaleX(.87)">112&#x27;604</div></div>
<div class="cell" style="left:406px;top:252px;width:49px;height:15px;"><div class="g gr" style="right:4.5px;top:1px;transform:scaleX(.87)">139&#x27;672</div></div>
<div class="cell" style="left:458px;top:252px;width:50px;height:15px;"><div class="g gr" style="right:4.5px;top:1px;transform:scaleX(.87)">97&#x27;713</div></div>
<div style="left:511px;top:253px;width:51px;height:14px;background:#c0c0c0"></div>
<div class="cell" style="left:511px;top:252px;width:51px;height:15px;"><div class="g gr" style="right:3.5px;top:1px;transform:scaleX(.87)">349&#x27;989</div></div>
<div class="cell" style="left:565px;top:252px;width:51px;height:15px;"><div class="g gr" style="right:4.5px;top:1px;transform:scaleX(.87)">111&#x27;522</div></div>
<div class="cell" style="left:619px;top:252px;width:51px;height:15px;"><div class="g gr" style="right:4.5px;top:1px;transform:scaleX(.87)">119&#x27;205</div></div>
<div class="cell" style="left:673px;top:252px;width:49px;height:15px;"><div class="g gr" style="right:4.5px;top:1px;transform:scaleX(.87)">98&#x27;866</div></div>
<div style="left:725px;top:253px;width:50px;height:14px;background:#c0c0c0"></div>
<div class="cell" style="left:725px;top:252px;width:50px;height:15px;"><div class="g gr" style="right:3.5px;top:1px;transform:scaleX(.87)">329&#x27;593</div></div>
<div class="cell" style="left:778px;top:252px;width:52px;height:15px;"><div class="g gr" style="right:4.5px;top:1px;transform:scaleX(.87)">106&#x27;627</div></div>
<div class="cell" style="left:833px;top:252px;width:50px;height:15px;"><div class="g gr" style="right:4.5px;top:1px;transform:scaleX(.87)">100&#x27;228</div></div>
<div class="cell" style="left:886px;top:252px;width:55px;height:15px;"><div class="g gr" style="right:4.5px;top:1px;transform:scaleX(.87)">97&#x27;528</div></div>
<div style="left:944px;top:253px;width:51px;height:14px;background:#c0c0c0"></div>
<div class="cell" style="left:944px;top:252px;width:51px;height:15px;"><div class="g gr" style="right:3.5px;top:1px;transform:scaleX(.87)">304&#x27;383</div></div>
<div style="left:47px;top:267px;width:948px;height:1px;background:#c0c0c0"></div>
<div class="hd" style="left:28px;top:268px;width:18px;height:15px;"></div>
<div style="left:28px;top:283px;width:18px;height:1px;background:#000"></div>
<div class="cell" style="left:47px;top:268px;width:230px;height:15px;"><div class="g" style="left:14.8px;top:1px;transform:scaleX(0.9091)">+ 01.06 Выплаты частным лицам</div></div>
<div class="cell" style="left:305px;top:268px;width:28px;height:15px;"><div class="g gr" style="right:0.5px;top:1px;transform:scaleX(.87)">2003</div></div>
<div class="cell" style="left:334px;top:268px;width:14px;height:15px;"><div class="g" style="left:3.8px;top:1px;transform:scaleX(0.8850)">-</div></div>
<div class="cell" style="left:351px;top:268px;width:52px;height:15px;"><div class="g gr" style="right:4.5px;top:1px;transform:scaleX(.87)">364&#x27;853</div></div>
<div class="cell" style="left:406px;top:268px;width:49px;height:15px;"><div class="g gr" style="right:4.5px;top:1px;transform:scaleX(.87)">368&#x27;921</div></div>
<div class="cell" style="left:458px;top:268px;width:50px;height:15px;"><div class="g gr" style="right:4.5px;top:1px;transform:scaleX(.87)">383&#x27;222</div></div>
<div style="left:511px;top:269px;width:51px;height:14px;background:#c0c0c0"></div>
<div class="cell" style="left:511px;top:268px;width:51px;height:15px;"><div class="g gr" style="right:3.5px;top:1px;transform:scaleX(.87)">1&#x27;116&#x27;996</div></div>
<div class="cell" style="left:565px;top:268px;width:51px;height:15px;"><div class="g gr" style="right:4.5px;top:1px;transform:scaleX(.87)">376&#x27;961</div></div>
<div class="cell" style="left:619px;top:268px;width:51px;height:15px;"><div class="g gr" style="right:4.5px;top:1px;transform:scaleX(.87)">377&#x27;069</div></div>
<div class="cell" style="left:673px;top:268px;width:49px;height:15px;"><div class="g gr" style="right:4.5px;top:1px;transform:scaleX(.87)">392&#x27;155</div></div>
<div style="left:725px;top:269px;width:50px;height:14px;background:#c0c0c0"></div>
<div class="cell" style="left:725px;top:268px;width:50px;height:15px;"><div class="g gr" style="right:3.5px;top:1px;transform:scaleX(.87)">1&#x27;146&#x27;185</div></div>
<div class="cell" style="left:778px;top:268px;width:52px;height:15px;"><div class="g gr" style="right:4.5px;top:1px;transform:scaleX(.87)">467&#x27;661</div></div>
<div class="cell" style="left:833px;top:268px;width:50px;height:15px;"><div class="g gr" style="right:4.5px;top:1px;transform:scaleX(.87)">389&#x27;361</div></div>
<div class="cell" style="left:886px;top:268px;width:55px;height:15px;"><div class="g gr" style="right:4.5px;top:1px;transform:scaleX(.87)">403&#x27;205</div></div>
<div style="left:944px;top:269px;width:51px;height:14px;background:#c0c0c0"></div>
<div class="cell" style="left:944px;top:268px;width:51px;height:15px;"><div class="g gr" style="right:3.5px;top:1px;transform:scaleX(.87)">1&#x27;260&#x27;227</div></div>
<div style="left:47px;top:283px;width:948px;height:1px;background:#c0c0c0"></div>
<div class="hd" style="left:28px;top:284px;width:18px;height:15px;"></div>
<div style="left:28px;top:299px;width:18px;height:1px;background:#000"></div>
<div class="cell" style="left:47px;top:284px;width:230px;height:15px;"><div class="g" style="left:14.8px;top:1px;transform:scaleX(0.9062)">+ 01.07 Расходы социальной сферы</div></div>
<div class="cell" style="left:305px;top:284px;width:28px;height:15px;"><div class="g gr" style="right:0.5px;top:1px;transform:scaleX(.87)">2003</div></div>
<div class="cell" style="left:334px;top:284px;width:14px;height:15px;"><div class="g" style="left:3.8px;top:1px;transform:scaleX(0.8850)">-</div></div>
<div class="cell" style="left:351px;top:284px;width:52px;height:15px;"><div class="g gr" style="right:4.5px;top:1px;transform:scaleX(.87)">36&#x27;036</div></div>
<div class="cell" style="left:406px;top:284px;width:49px;height:15px;"><div class="g gr" style="right:4.5px;top:1px;transform:scaleX(.87)">36&#x27;036</div></div>
<div class="cell" style="left:458px;top:284px;width:50px;height:15px;"><div class="g gr" style="right:4.5px;top:1px;transform:scaleX(.87)">36&#x27;036</div></div>
<div style="left:511px;top:285px;width:51px;height:14px;background:#c0c0c0"></div>
<div class="cell" style="left:511px;top:284px;width:51px;height:15px;"><div class="g gr" style="right:3.5px;top:1px;transform:scaleX(.87)">108&#x27;108</div></div>
<div class="cell" style="left:565px;top:284px;width:51px;height:15px;"><div class="g gr" style="right:4.5px;top:1px;transform:scaleX(.87)">36&#x27;036</div></div>
<div class="cell" style="left:619px;top:284px;width:51px;height:15px;"><div class="g gr" style="right:4.5px;top:1px;transform:scaleX(.87)">36&#x27;036</div></div>
<div class="cell" style="left:673px;top:284px;width:49px;height:15px;"><div class="g gr" style="right:4.5px;top:1px;transform:scaleX(.87)">36&#x27;036</div></div>
<div style="left:725px;top:285px;width:50px;height:14px;background:#c0c0c0"></div>
<div class="cell" style="left:725px;top:284px;width:50px;height:15px;"><div class="g gr" style="right:3.5px;top:1px;transform:scaleX(.87)">108&#x27;108</div></div>
<div class="cell" style="left:778px;top:284px;width:52px;height:15px;"><div class="g gr" style="right:4.5px;top:1px;transform:scaleX(.87)">36&#x27;040</div></div>
<div class="cell" style="left:833px;top:284px;width:50px;height:15px;"><div class="g gr" style="right:4.5px;top:1px;transform:scaleX(.87)">36&#x27;040</div></div>
<div class="cell" style="left:886px;top:284px;width:55px;height:15px;"><div class="g gr" style="right:4.5px;top:1px;transform:scaleX(.87)">36&#x27;040</div></div>
<div style="left:944px;top:285px;width:51px;height:14px;background:#c0c0c0"></div>
<div class="cell" style="left:944px;top:284px;width:51px;height:15px;"><div class="g gr" style="right:3.5px;top:1px;transform:scaleX(.87)">108&#x27;120</div></div>
<div style="left:47px;top:299px;width:948px;height:1px;background:#c0c0c0"></div>
<div class="hd" style="left:28px;top:300px;width:18px;height:15px;"></div>
<div style="left:28px;top:315px;width:18px;height:1px;background:#000"></div>
<div class="cell" style="left:47px;top:300px;width:230px;height:15px;"><div class="g" style="left:14.8px;top:1px;transform:scaleX(0.9031)">+ 01.08 Расходы по финансовым операциям</div></div>
<div class="cell" style="left:305px;top:300px;width:28px;height:15px;"><div class="g gr" style="right:0.5px;top:1px;transform:scaleX(.87)">2003</div></div>
<div class="cell" style="left:334px;top:300px;width:14px;height:15px;"><div class="g" style="left:3.8px;top:1px;transform:scaleX(0.8850)">-</div></div>
<div class="cell" style="left:351px;top:300px;width:52px;height:15px;"><div class="g gr" style="right:4.5px;top:1px;transform:scaleX(.87)">226&#x27;884</div></div>
<div class="cell" style="left:406px;top:300px;width:49px;height:15px;"><div class="g gr" style="right:4.5px;top:1px;transform:scaleX(.87)">229&#x27;106</div></div>
<div class="cell" style="left:458px;top:300px;width:50px;height:15px;"><div class="g gr" style="right:4.5px;top:1px;transform:scaleX(.87)">233&#x27;968</div></div>
<div style="left:511px;top:301px;width:51px;height:14px;background:#c0c0c0"></div>
<div class="cell" style="left:511px;top:300px;width:51px;height:15px;"><div class="g gr" style="right:3.5px;top:1px;transform:scaleX(.87)">689&#x27;958</div></div>
<div class="cell" style="left:565px;top:300px;width:51px;height:15px;"><div class="g gr" style="right:4.5px;top:1px;transform:scaleX(.87)">236&#x27;841</div></div>
<div class="cell" style="left:619px;top:300px;width:51px;height:15px;"><div class="g gr" style="right:4.5px;top:1px;transform:scaleX(.87)">238&#x27;690</div></div>
<div class="cell" style="left:673px;top:300px;width:49px;height:15px;"><div class="g gr" style="right:4.5px;top:1px;transform:scaleX(.87)">238&#x27;402</div></div>
<div style="left:725px;top:301px;width:50px;height:14px;background:#c0c0c0"></div>
<div class="cell" style="left:725px;top:300px;width:50px;height:15px;"><div class="g gr" style="right:3.5px;top:1px;transform:scaleX(.87)">713&#x27;933</div></div>
<div class="cell" style="left:778px;top:300px;width:52px;height:15px;"><div class="g gr" style="right:4.5px;top:1px;transform:scaleX(.87)">624&#x27;696</div></div>
<div class="cell" style="left:833px;top:300px;width:50px;height:15px;"><div class="g gr" style="right:4.5px;top:1px;transform:scaleX(.87)">638&#x27;023</div></div>
<div class="cell" style="left:886px;top:300px;width:55px;height:15px;"><div class="g gr" style="right:4.5px;top:1px;transform:scaleX(.87)">635&#x27;516</div></div>
<div style="left:944px;top:301px;width:51px;height:14px;background:#c0c0c0"></div>
<div class="cell" style="left:944px;top:300px;width:51px;height:15px;"><div class="g gr" style="right:3.5px;top:1px;transform:scaleX(.87)">1&#x27;898&#x27;235</div></div>
<div style="left:47px;top:315px;width:948px;height:1px;background:#c0c0c0"></div>
<div class="hd" style="left:28px;top:316px;width:18px;height:15px;"></div>
<div style="left:28px;top:331px;width:18px;height:1px;background:#000"></div>
<div class="cell" style="left:47px;top:316px;width:230px;height:15px;"><div class="g" style="left:14.8px;top:1px;transform:scaleX(0.9183)">+ 01.09 Дивиденды акционеров</div></div>
<div class="cell" style="left:305px;top:316px;width:28px;height:15px;"><div class="g gr" style="right:0.5px;top:1px;transform:scaleX(.87)">2003</div></div>
<div class="cell" style="left:334px;top:316px;width:14px;height:15px;"><div class="g" style="left:3.8px;top:1px;transform:scaleX(0.8850)">-</div></div>
<div class="cell" style="left:351px;top:316px;width:52px;height:15px;"><div class="g gr" style="right:4.5px;top:1px;transform:scaleX(.87)">0</div></div>
<div class="cell" style="left:406px;top:316px;width:49px;height:15px;"><div class="g gr" style="right:4.5px;top:1px;transform:scaleX(.87)">0</div></div>
<div class="cell" style="left:458px;top:316px;width:50px;height:15px;"><div class="g gr" style="right:4.5px;top:1px;transform:scaleX(.87)">0</div></div>
<div style="left:511px;top:317px;width:51px;height:14px;background:#c0c0c0"></div>
<div class="cell" style="left:511px;top:316px;width:51px;height:15px;"><div class="g gr" style="right:3.5px;top:1px;transform:scaleX(.87)">0</div></div>
<div class="cell" style="left:565px;top:316px;width:51px;height:15px;"><div class="g gr" style="right:4.5px;top:1px;transform:scaleX(.87)">0</div></div>
<div class="cell" style="left:619px;top:316px;width:51px;height:15px;"><div class="g gr" style="right:4.5px;top:1px;transform:scaleX(.87)">0</div></div>
<div class="cell" style="left:673px;top:316px;width:49px;height:15px;"><div class="g gr" style="right:4.5px;top:1px;transform:scaleX(.87)">0</div></div>
<div style="left:725px;top:317px;width:50px;height:14px;background:#c0c0c0"></div>
<div class="cell" style="left:725px;top:316px;width:50px;height:15px;"><div class="g gr" style="right:3.5px;top:1px;transform:scaleX(.87)">0</div></div>
<div class="cell" style="left:778px;top:316px;width:52px;height:15px;"><div class="g gr" style="right:4.5px;top:1px;transform:scaleX(.87)">710&#x27;000</div></div>
<div class="cell" style="left:833px;top:316px;width:50px;height:15px;"><div class="g gr" style="right:4.5px;top:1px;transform:scaleX(.87)">0</div></div>
<div class="cell" style="left:886px;top:316px;width:55px;height:15px;"><div class="g gr" style="right:4.5px;top:1px;transform:scaleX(.87)">0</div></div>
<div style="left:944px;top:317px;width:51px;height:14px;background:#c0c0c0"></div>
<div class="cell" style="left:944px;top:316px;width:51px;height:15px;"><div class="g gr" style="right:3.5px;top:1px;transform:scaleX(.87)">710&#x27;000</div></div>
<div style="left:47px;top:331px;width:948px;height:1px;background:#c0c0c0"></div>
<div class="hd" style="left:28px;top:332px;width:18px;height:15px;"></div>
<div style="left:28px;top:347px;width:18px;height:1px;background:#000"></div>
<div class="cell" style="left:47px;top:332px;width:230px;height:15px;"><div class="g" style="left:14.8px;top:1px;transform:scaleX(0.9132)">+ 01.10 Налоги и другие регулируемые выплаты</div></div>
<div class="cell" style="left:305px;top:332px;width:28px;height:15px;"><div class="g gr" style="right:0.5px;top:1px;transform:scaleX(.87)">2003</div></div>
<div class="cell" style="left:334px;top:332px;width:14px;height:15px;"><div class="g" style="left:3.8px;top:1px;transform:scaleX(0.8850)">-</div></div>
<div class="cell" style="left:351px;top:332px;width:52px;height:15px;"><div class="g gr" style="right:4.5px;top:1px;transform:scaleX(.87)">552&#x27;317</div></div>
<div class="cell" style="left:406px;top:332px;width:49px;height:15px;"><div class="g gr" style="right:4.5px;top:1px;transform:scaleX(.87)">533&#x27;694</div></div>
<div class="cell" style="left:458px;top:332px;width:50px;height:15px;"><div class="g gr" style="right:4.5px;top:1px;transform:scaleX(.87)">564&#x27;114</div></div>
<div style="left:511px;top:333px;width:51px;height:14px;background:#c0c0c0"></div>
<div class="cell" style="left:511px;top:332px;width:51px;height:15px;"><div class="g gr" style="right:3.5px;top:1px;transform:scaleX(.87)">1&#x27;650&#x27;125</div></div>
<div class="cell" style="left:565px;top:332px;width:51px;height:15px;"><div class="g gr" style="right:4.5px;top:1px;transform:scaleX(.87)">701&#x27;998</div></div>
<div class="cell" style="left:619px;top:332px;width:51px;height:15px;"><div class="g gr" style="right:4.5px;top:1px;transform:scaleX(.87)">642&#x27;324</div></div>
<div class="cell" style="left:673px;top:332px;width:49px;height:15px;"><div class="g gr" style="right:4.5px;top:1px;transform:scaleX(.87)">644&#x27;166</div></div>
<div style="left:725px;top:333px;width:50px;height:14px;background:#c0c0c0"></div>
<div class="cell" style="left:725px;top:332px;width:50px;height:15px;"><div class="g gr" style="right:3.5px;top:1px;transform:scaleX(.87)">1&#x27;988&#x27;488</div></div>
<div class="cell" style="left:778px;top:332px;width:52px;height:15px;"><div class="g gr" style="right:4.5px;top:1px;transform:scaleX(.87)">704&#x27;417</div></div>
<div class="cell" style="left:833px;top:332px;width:50px;height:15px;"><div class="g gr" style="right:4.5px;top:1px;transform:scaleX(.87)">710&#x27;756</div></div>
<div class="cell" style="left:886px;top:332px;width:55px;height:15px;"><div class="g gr" style="right:4.5px;top:1px;transform:scaleX(.87)">705&#x27;293</div></div>
<div style="left:944px;top:333px;width:51px;height:14px;background:#c0c0c0"></div>
<div class="cell" style="left:944px;top:332px;width:51px;height:15px;"><div class="g gr" style="right:3.5px;top:1px;transform:scaleX(.87)">2&#x27;120&#x27;466</div></div>
<div style="left:47px;top:347px;width:948px;height:1px;background:#c0c0c0"></div>
<div class="hd" style="left:28px;top:348px;width:18px;height:15px;"></div>
<div style="left:28px;top:363px;width:18px;height:1px;background:#000"></div>
<div class="cell" style="left:47px;top:348px;width:230px;height:15px;"><div class="g" style="left:14.8px;top:1px;transform:scaleX(0.9106)">+ 01.11 Прочие расходы</div></div>
<div class="cell" style="left:305px;top:348px;width:28px;height:15px;"><div class="g gr" style="right:0.5px;top:1px;transform:scaleX(.87)">2003</div></div>
<div class="cell" style="left:334px;top:348px;width:14px;height:15px;"><div class="g" style="left:3.8px;top:1px;transform:scaleX(0.8850)">-</div></div>
<div class="cell" style="left:351px;top:348px;width:52px;height:15px;"><div class="g gr" style="right:4.5px;top:1px;transform:scaleX(.87)">0</div></div>
<div class="cell" style="left:406px;top:348px;width:49px;height:15px;"><div class="g gr" style="right:4.5px;top:1px;transform:scaleX(.87)">0</div></div>
<div class="cell" style="left:458px;top:348px;width:50px;height:15px;"><div class="g gr" style="right:4.5px;top:1px;transform:scaleX(.87)">0</div></div>
<div style="left:511px;top:349px;width:51px;height:14px;background:#c0c0c0"></div>
<div class="cell" style="left:511px;top:348px;width:51px;height:15px;"><div class="g gr" style="right:3.5px;top:1px;transform:scaleX(.87)">0</div></div>
<div class="cell" style="left:565px;top:348px;width:51px;height:15px;"><div class="g gr" style="right:4.5px;top:1px;transform:scaleX(.87)">0</div></div>
<div class="cell" style="left:619px;top:348px;width:51px;height:15px;"><div class="g gr" style="right:4.5px;top:1px;transform:scaleX(.87)">0</div></div>
<div class="cell" style="left:673px;top:348px;width:49px;height:15px;"><div class="g gr" style="right:4.5px;top:1px;transform:scaleX(.87)">0</div></div>
<div style="left:725px;top:349px;width:50px;height:14px;background:#c0c0c0"></div>
<div class="cell" style="left:725px;top:348px;width:50px;height:15px;"><div class="g gr" style="right:3.5px;top:1px;transform:scaleX(.87)">0</div></div>
<div class="cell" style="left:778px;top:348px;width:52px;height:15px;"><div class="g gr" style="right:4.5px;top:1px;transform:scaleX(.87)">0</div></div>
<div class="cell" style="left:833px;top:348px;width:50px;height:15px;"><div class="g gr" style="right:4.5px;top:1px;transform:scaleX(.87)">0</div></div>
<div class="cell" style="left:886px;top:348px;width:55px;height:15px;"><div class="g gr" style="right:4.5px;top:1px;transform:scaleX(.87)">0</div></div>
<div style="left:944px;top:349px;width:51px;height:14px;background:#c0c0c0"></div>
<div class="cell" style="left:944px;top:348px;width:51px;height:15px;"><div class="g gr" style="right:3.5px;top:1px;transform:scaleX(.87)">0</div></div>
<div style="left:47px;top:363px;width:948px;height:1px;background:#c0c0c0"></div>
<div class="hd" style="left:28px;top:364px;width:18px;height:15px;"></div>
<div style="left:28px;top:379px;width:18px;height:1px;background:#000"></div>
<div class="cell" style="left:47px;top:364px;width:230px;height:15px;"><div class="g" style="left:14.8px;top:1px;transform:scaleX(0.9147)">+ 01.12 Инвестиции (капитальные вложения)</div></div>
<div class="cell" style="left:305px;top:364px;width:28px;height:15px;"><div class="g gr" style="right:0.5px;top:1px;transform:scaleX(.87)">2003</div></div>
<div class="cell" style="left:334px;top:364px;width:14px;height:15px;"><div class="g" style="left:3.8px;top:1px;transform:scaleX(0.8850)">-</div></div>
<div class="cell" style="left:351px;top:364px;width:52px;height:15px;"><div class="g gr" style="right:4.5px;top:1px;transform:scaleX(.87)">589&#x27;578</div></div>
<div class="cell" style="left:406px;top:364px;width:49px;height:15px;"><div class="g gr" style="right:4.5px;top:1px;transform:scaleX(.87)">661&#x27;414</div></div>
<div class="cell" style="left:458px;top:364px;width:50px;height:15px;"><div class="g gr" style="right:4.5px;top:1px;transform:scaleX(.87)">722&#x27;783</div></div>
<div style="left:511px;top:365px;width:51px;height:14px;background:#c0c0c0"></div>
<div class="cell" style="left:511px;top:364px;width:51px;height:15px;"><div class="g gr" style="right:3.5px;top:1px;transform:scaleX(.87)">1&#x27;973&#x27;775</div></div>
<div class="cell" style="left:565px;top:364px;width:51px;height:15px;"><div class="g gr" style="right:4.5px;top:1px;transform:scaleX(.87)">912&#x27;083</div></div>
<div class="cell" style="left:619px;top:364px;width:51px;height:15px;"><div class="g gr" style="right:4.5px;top:1px;transform:scaleX(.87)">643&#x27;832</div></div>
<div class="cell" style="left:673px;top:364px;width:49px;height:15px;"><div class="g gr" style="right:4.5px;top:1px;transform:scaleX(.87)">697&#x27;616</div></div>
<div style="left:725px;top:365px;width:50px;height:14px;background:#c0c0c0"></div>
<div class="cell" style="left:725px;top:364px;width:50px;height:15px;"><div class="g gr" style="right:3.5px;top:1px;transform:scaleX(.87)">2&#x27;253&#x27;531</div></div>
<div class="cell" style="left:778px;top:364px;width:52px;height:15px;"><div class="g gr" style="right:4.5px;top:1px;transform:scaleX(.87)">576&#x27;334</div></div>
<div class="cell" style="left:833px;top:364px;width:50px;height:15px;"><div class="g gr" style="right:4.5px;top:1px;transform:scaleX(.87)">684&#x27;322</div></div>
<div class="cell" style="left:886px;top:364px;width:55px;height:15px;"><div class="g gr" style="right:4.5px;top:1px;transform:scaleX(.87)">659&#x27;365</div></div>
<div style="left:944px;top:365px;width:51px;height:14px;background:#c0c0c0"></div>
<div class="cell" style="left:944px;top:364px;width:51px;height:15px;"><div class="g gr" style="right:3.5px;top:1px;transform:scaleX(.87)">1&#x27;920&#x27;021</div></div>
<div style="left:47px;top:379px;width:948px;height:1px;background:#c0c0c0"></div>
<div class="hd" style="left:28px;top:380px;width:18px;height:15px;"></div>
<div style="left:28px;top:395px;width:18px;height:1px;background:#000"></div>
<div class="cell" style="left:47px;top:380px;width:230px;height:15px;"><div class="g" style="left:14.8px;top:1px;transform:scaleX(0.9253)">+ 01.13 Невыполненные обязяательства за период</div></div>
<div class="cell" style="left:305px;top:380px;width:28px;height:15px;"><div class="g gr" style="right:0.5px;top:1px;transform:scaleX(.87)">2003</div></div>
<div class="cell" style="left:334px;top:380px;width:14px;height:15px;"><div class="g" style="left:3.8px;top:1px;transform:scaleX(0.8850)">-</div></div>
<div class="cell" style="left:351px;top:380px;width:52px;height:15px;"><div class="g gr" style="right:4.5px;top:1px;transform:scaleX(.87)">208&#x27;333</div></div>
<div class="cell" style="left:406px;top:380px;width:49px;height:15px;"><div class="g gr" style="right:4.5px;top:1px;transform:scaleX(.87)">208&#x27;333</div></div>
<div class="cell" style="left:458px;top:380px;width:50px;height:15px;"><div class="g gr" style="right:4.5px;top:1px;transform:scaleX(.87)">208&#x27;333</div></div>
<div style="left:511px;top:381px;width:51px;height:14px;background:#c0c0c0"></div>
<div class="cell" style="left:511px;top:380px;width:51px;height:15px;"><div class="g gr" style="right:3.5px;top:1px;transform:scaleX(.87)">624&#x27;999</div></div>
<div class="cell" style="left:565px;top:380px;width:51px;height:15px;"><div class="g gr" style="right:4.5px;top:1px;transform:scaleX(.87)">208&#x27;333</div></div>
<div class="cell" style="left:619px;top:380px;width:51px;height:15px;"><div class="g gr" style="right:4.5px;top:1px;transform:scaleX(.87)">208&#x27;333</div></div>
<div class="cell" style="left:673px;top:380px;width:49px;height:15px;"><div class="g gr" style="right:4.5px;top:1px;transform:scaleX(.87)">208&#x27;333</div></div>
<div style="left:725px;top:381px;width:50px;height:14px;background:#c0c0c0"></div>
<div class="cell" style="left:725px;top:380px;width:50px;height:15px;"><div class="g gr" style="right:3.5px;top:1px;transform:scaleX(.87)">624&#x27;999</div></div>
<div class="cell" style="left:778px;top:380px;width:52px;height:15px;"><div class="g gr" style="right:4.5px;top:1px;transform:scaleX(.87)">208&#x27;333</div></div>
<div class="cell" style="left:833px;top:380px;width:50px;height:15px;"><div class="g gr" style="right:4.5px;top:1px;transform:scaleX(.87)">208&#x27;333</div></div>
<div class="cell" style="left:886px;top:380px;width:55px;height:15px;"><div class="g gr" style="right:4.5px;top:1px;transform:scaleX(.87)">208&#x27;333</div></div>
<div style="left:944px;top:381px;width:51px;height:14px;background:#c0c0c0"></div>
<div class="cell" style="left:944px;top:380px;width:51px;height:15px;"><div class="g gr" style="right:3.5px;top:1px;transform:scaleX(.87)">624&#x27;999</div></div>
<div style="left:47px;top:395px;width:948px;height:1px;background:#c0c0c0"></div>
<div class="hd" style="left:28px;top:396px;width:18px;height:15px;"></div>
<div style="left:28px;top:411px;width:18px;height:1px;background:#000"></div>
<div class="cell" style="left:47px;top:396px;width:230px;height:15px;"><div class="g" style="left:2.8px;top:1px;transform:scaleX(0.9278)">+ 02 Доходы</div></div>
<div class="cell" style="left:305px;top:396px;width:28px;height:15px;"><div class="g gr" style="right:0.5px;top:1px;transform:scaleX(.87)">2003</div></div>
<div class="cell" style="left:334px;top:396px;width:14px;height:15px;"><div class="g" style="left:3.3px;top:1px;transform:scaleX(0.8850)">+</div></div>
<div class="cell" style="left:351px;top:396px;width:52px;height:15px;"><div class="g gr" style="right:4.5px;top:1px;transform:scaleX(.87)">2&#x27;950&#x27;777</div></div>
<div class="cell" style="left:406px;top:396px;width:49px;height:15px;"><div class="g gr" style="right:4.5px;top:1px;transform:scaleX(.87)">2&#x27;941&#x27;939</div></div>
<div class="cell" style="left:458px;top:396px;width:50px;height:15px;"><div class="g gr" style="right:4.5px;top:1px;transform:scaleX(.87)">3&#x27;346&#x27;811</div></div>
<div style="left:511px;top:397px;width:51px;height:14px;background:#c0c0c0"></div>
<div class="cell" style="left:511px;top:396px;width:51px;height:15px;"><div class="g gr" style="right:3.5px;top:1px;transform:scaleX(.87)">9&#x27;239&#x27;527</div></div>
<div class="cell" style="left:565px;top:396px;width:51px;height:15px;"><div class="g gr" style="right:4.5px;top:1px;transform:scaleX(.87)">3&#x27;620&#x27;381</div></div>
<div class="cell" style="left:619px;top:396px;width:51px;height:15px;"><div class="g gr" style="right:4.5px;top:1px;transform:scaleX(.87)">3&#x27;183&#x27;456</div></div>
<div class="cell" style="left:673px;top:396px;width:49px;height:15px;"><div class="g gr" style="right:4.5px;top:1px;transform:scaleX(.87)">3&#x27;284&#x27;652</div></div>
<div style="left:725px;top:397px;width:50px;height:14px;background:#c0c0c0"></div>
<div class="cell" style="left:725px;top:396px;width:50px;height:15px;"><div class="g gr" style="right:3.5px;top:1px;transform:scaleX(.87)">0&#x27;088&#x27;489</div></div>
<div class="cell" style="left:778px;top:396px;width:52px;height:15px;"><div class="g gr" style="right:4.5px;top:1px;transform:scaleX(.87)">3&#x27;653&#x27;810</div></div>
<div class="cell" style="left:833px;top:396px;width:50px;height:15px;"><div class="g gr" style="right:4.5px;top:1px;transform:scaleX(.87)">3&#x27;781&#x27;341</div></div>
<div class="cell" style="left:886px;top:396px;width:55px;height:15px;"><div class="g gr" style="right:4.5px;top:1px;transform:scaleX(.87)">3&#x27;757&#x27;796</div></div>
<div style="left:944px;top:397px;width:51px;height:14px;background:#c0c0c0"></div>
<div class="cell" style="left:944px;top:396px;width:51px;height:15px;"><div class="g gr" style="right:3.5px;top:1px;transform:scaleX(.87)">1&#x27;192&#x27;947</div></div>
<div style="left:47px;top:411px;width:948px;height:1px;background:#c0c0c0"></div>
<div style="left:277px;top:172px;width:1px;height:240px;background:#c0c0c0"></div>
<div style="left:304px;top:172px;width:1px;height:240px;background:#c0c0c0"></div>
<div style="left:333px;top:172px;width:1px;height:240px;background:#c0c0c0"></div>
<div style="left:348px;top:172px;width:1px;height:240px;background:#c0c0c0"></div>
<div style="left:403px;top:172px;width:1px;height:240px;background:#c0c0c0"></div>
<div style="left:455px;top:172px;width:1px;height:240px;background:#c0c0c0"></div>
<div style="left:508px;top:172px;width:1px;height:240px;background:#c0c0c0"></div>
<div style="left:562px;top:172px;width:1px;height:240px;background:#c0c0c0"></div>
<div style="left:616px;top:172px;width:1px;height:240px;background:#c0c0c0"></div>
<div style="left:670px;top:172px;width:1px;height:240px;background:#c0c0c0"></div>
<div style="left:722px;top:172px;width:1px;height:240px;background:#c0c0c0"></div>
<div style="left:775px;top:172px;width:1px;height:240px;background:#c0c0c0"></div>
<div style="left:830px;top:172px;width:1px;height:240px;background:#c0c0c0"></div>
<div style="left:883px;top:172px;width:1px;height:240px;background:#c0c0c0"></div>
<div style="left:941px;top:172px;width:1px;height:240px;background:#c0c0c0"></div>
<div style="left:995px;top:172px;width:1px;height:240px;background:#c0c0c0"></div>
<div style="left:46px;top:157px;width:1px;height:255px;background:#000"></div>
<div style="left:348px;top:157px;width:1px;height:255px;background:#000"></div>
<svg style="left:34px;top:174px" width="8" height="11"><path d="M0 0L6.5 5.5 0 11z" fill="#000"/></svg>
<div style="left:28px;top:430px;width:968px;height:18px;background:#d4d0c8"></div>
<div class="t" style="left:33.5px;top:434px;transform-origin:0 0;transform:scaleX(0.9519);">Запись:</div>
<div class="btn" style="left:78px;top:432px;width:19px;height:15px;"></div>
<div class="btn" style="left:98px;top:432px;width:20px;height:15px;"></div>
<div style="left:122px;top:432px;width:64px;height:15px;background:#fff;box-shadow:inset 1px 1px 0 #000,inset 2px 2px 0 #000"></div>
<div class="t" style="left:176.5px;top:434px;transform-origin:0 0;transform:scaleX(0.7940);">1</div>
<div class="btn" style="left:190px;top:432px;width:20px;height:15px;"></div>
<div class="btn" style="left:210px;top:432px;width:20px;height:15px;"></div>
<div class="btn" style="left:230px;top:432px;width:20px;height:15px;"></div>
<div class="btn" style="left:250px;top:432px;width:20px;height:15px;"></div>
<div class="btn" style="left:270px;top:432px;width:20px;height:15px;"></div>
<svg style="left:83px;top:435px" width="8" height="9"><rect x="0" y="0" width="2" height="9" fill="#000"/><path d="M7.500 0v9L3 4.500z" fill="#000"/></svg>
<svg style="left:105px;top:435px" width="5" height="9"><path d="M4.500 0v9L0 4.500z" fill="#808080"/></svg>
<svg style="left:197px;top:435px" width="5" height="9"><path d="M0 0v9l4.500-4.500z" fill="#000"/></svg>
<svg style="left:216px;top:435px" width="8" height="9"><path d="M0 0v9l4.500-4.500z" fill="#000"/><rect x="5.500" y="0" width="2" height="9" fill="#000"/></svg>
<svg style="left:234px;top:435px" width="13" height="9"><path d="M0 0v9l4.500-4.500z" fill="#808080"/><path d="M9 1v7M5.800 4.500h6.400M6.800 2.200l4.400 4.600M11.200 2.200L6.800 6.800" stroke="#808080" stroke-width="1"/></svg>
<svg style="left:253px;top:435px" width="14" height="9"><rect x="0" y="0" width="14" height="9" rx="3" fill="#808080"/><path d="M4.500 2l5 5M9.500 2l-5 5" stroke="#d4d0c8" stroke-width="1.600"/></svg>
<svg style="left:273px;top:435px" width="14" height="10"><path d="M0 0v9l4.500-4.500z" fill="#000"/><rect x="6" y="0" width="2" height="6" fill="#000"/><rect x="6" y="7.500" width="2" height="2" fill="#000"/><rect x="9.500" y="8" width="1.200" height="1.500" fill="#000"/><rect x="12" y="8" width="1.200" height="1.500" fill="#000"/></svg>
<div class="t" style="left:294.5px;top:434px;transform-origin:0 0;transform:scaleX(1.0138);">из  15</div>
<div class="dith" style="left:442px;top:431px;width:554px;height:16px;"></div>
<div class="sb" style="left:442px;top:431px;width:16px;height:16px;"></div>
<div class="sb" style="left:458px;top:431px;width:213px;height:16px;"></div>
<div class="sb" style="left:980px;top:431px;width:16px;height:16px;"></div>
<svg style="left:447px;top:435px" width="4" height="7"><path d="M4 0v7L0 3.500z" fill="#000"/></svg>
<svg style="left:986px;top:435px" width="4" height="7"><path d="M0 0v7l4-3.500z" fill="#000"/></svg>
<div style="left:205px;top:670px;width:554px;height:44px;background:#6e6e6e;border-radius:1px"></div>
<div style="left:207px;top:672px;width:550px;height:40px;background:#808080;border:1px solid #e0ddd5;border-bottom:0"></div>
<div style="left:207px;top:688px;width:550px;height:24px;background:#dcd9d2"></div>
<div class="tb" style="left:208.5px;top:675px;transform-origin:0 0;transform:scaleX(1.0117);color:#fff">Режим формы</div>
<svg style="left:729px;top:678px" width="7" height="4"><path d="M0 0h7L3.5 4z" fill="#fff"/></svg>
<svg style="left:745px;top:677px" width="8" height="8"><path d="M1 1l6 6M7 1l-6 6" stroke="#fff" stroke-width="1.6" fill="none"/></svg>
<div style="left:256px;top:690px;width:1px;height:20px;background:#a6a39c"></div>
<div style="left:331px;top:690px;width:1px;height:20px;background:#a6a39c"></div>
<div style="left:406px;top:690px;width:1px;height:20px;background:#a6a39c"></div>
<div style="left:435px;top:690px;width:1px;height:20px;background:#a6a39c"></div>
<div style="left:487px;top:690px;width:1px;height:20px;background:#a6a39c"></div>
<div style="left:585px;top:690px;width:1px;height:20px;background:#a6a39c"></div>
<div style="left:614px;top:690px;width:1px;height:20px;background:#a6a39c"></div>
<div style="left:666px;top:690px;width:1px;height:20px;background:#a6a39c"></div>
<div style="left:729px;top:690px;width:1px;height:20px;background:#a6a39c"></div>
<svg style="left:212px;top:693px" width="14" height="14" viewBox="0 0 14 14" shape-rendering="crispEdges"><rect x="0" y="0" width="14" height="1" fill="#848484"/><rect x="0" y="1" width="2" height="1" fill="#848484"/><rect x="2" y="1" width="8" height="1" fill="#d8d5ce"/><rect x="10" y="1" width="2" height="1" fill="#848484"/><rect x="12" y="1" width="1" height="1" fill="#d8d5ce"/><rect x="13" y="1" width="1" height="1" fill="#848484"/><rect x="0" y="2" width="2" height="1" fill="#848484"/><rect x="2" y="2" width="8" height="1" fill="#d8d5ce"/><rect x="10" y="2" width="4" height="1" fill="#848484"/><rect x="0" y="3" width="2" height="1" fill="#848484"/><rect x="2" y="3" width="8" height="1" fill="#d8d5ce"/><rect x="10" y="3" width="4" height="1" fill="#848484"/><rect x="0" y="4" width="2" height="1" fill="#848484"/><rect x="2" y="4" width="8" height="1" fill="#d8d5ce"/><rect x="10" y="4" width="4" height="1" fill="#848484"/><rect x="0" y="5" width="2" height="1" fill="#848484"/><rect x="2" y="5" width="8" height="1" fill="#d8d5ce"/><rect x="10" y="5" width="4" height="1" fill="#848484"/><rect x="0" y="6" width="2" height="1" fill="#848484"/><rect x="2" y="6" width="8" height="1" fill="#d8d5ce"/><rect x="10" y="6" width="4" height="1" fill="#848484"/><rect x="0" y="7" width="14" height="1" fill="#848484"/><rect x="0" y="8" width="14" height="1" fill="#848484"/><rect x="0" y="9" width="9" height="1" fill="#848484"/><rect x="9" y="9" width="2" height="1" fill="#d8d5ce"/><rect x="11" y="9" width="3" height="1" fill="#848484"/><rect x="0" y="10" width="9" height="1" fill="#848484"/><rect x="9" y="10" width="2" height="1" fill="#d8d5ce"/><rect x="11" y="10" width="3" height="1" fill="#848484"/><rect x="0" y="11" width="9" height="1" fill="#848484"/><rect x="9" y="11" width="2" height="1" fill="#d8d5ce"/><rect x="11" y="11" width="3" height="1" fill="#848484"/><rect x="0" y="12" width="9" height="1" fill="#848484"/><rect x="9" y="12" width="2" height="1" fill="#d8d5ce"/><rect x="11" y="12" width="3" height="1" fill="#848484"/><rect x="1" y="13" width="13" height="1" fill="#848484"/></svg>
<svg style="left:235px;top:692px" width="16" height="16"><path d="M3.5 1.5h7l3 3v10h-10z" fill="#fff" stroke="#000"/><rect x="1" y="2" width="3" height="3" fill="#d03020"/><rect x="4.4" y="2" width="3" height="3" fill="#3050d0"/><rect x="1" y="5.4" width="3" height="3" fill="#e8d020"/><rect x="4.4" y="5.4" width="3" height="3" fill="#30a030"/><rect x=".5" y="1.5" width="7.4" height="7.4" fill="none" stroke="#000" stroke-width=".8"/><circle cx="9" cy="9.5" r="3.6" fill="#b8f0f8" stroke="#000" stroke-width="1.2"/><path d="M11.8 12.3l3.2 3.2" stroke="#e02020" stroke-width="2"/></svg>
<svg style="left:263px;top:692px" width="16" height="16" viewBox="0 0 16 16" shape-rendering="crispEdges"><rect x="5" y="1" width="8" height="1" fill="#000"/><rect x="4" y="2" width="1" height="1" fill="#000"/><rect x="5" y="2" width="7" height="1" fill="#fff"/><rect x="12" y="2" width="1" height="1" fill="#000"/><rect x="4" y="3" width="1" height="1" fill="#000"/><rect x="5" y="3" width="1" height="1" fill="#fff"/><rect x="6" y="3" width="4" height="1" fill="#000"/><rect x="10" y="3" width="1" height="1" fill="#fff"/><rect x="11" y="3" width="1" height="1" fill="#000"/><rect x="3" y="4" width="1" height="1" fill="#000"/><rect x="4" y="4" width="7" height="1" fill="#fff"/><rect x="11" y="4" width="1" height="1" fill="#000"/><rect x="3" y="5" width="1" height="1" fill="#000"/><rect x="4" y="5" width="1" height="1" fill="#fff"/><rect x="5" y="5" width="4" height="1" fill="#000"/><rect x="9" y="5" width="1" height="1" fill="#fff"/><rect x="10" y="5" width="3" height="1" fill="#000"/><rect x="2" y="6" width="1" height="1" fill="#000"/><rect x="3" y="6" width="7" height="1" fill="#fff"/><rect x="10" y="6" width="1" height="1" fill="#000"/><rect x="11" y="6" width="1" height="1" fill="#c0c0c0"/><rect x="12" y="6" width="2" height="1" fill="#000"/><rect x="1" y="7" width="10" height="1" fill="#000"/><rect x="11" y="7" width="2" height="1" fill="#c0c0c0"/><rect x="13" y="7" width="2" height="1" fill="#000"/><rect x="0" y="8" width="1" height="1" fill="#000"/><rect x="1" y="8" width="10" height="1" fill="#fff"/><rect x="11" y="8" width="1" height="1" fill="#000"/><rect x="12" y="8" width="1" height="1" fill="#c0c0c0"/><rect x="13" y="8" width="2" height="1" fill="#000"/><rect x="0" y="9" width="1" height="1" fill="#000"/><rect x="1" y="9" width="10" height="1" fill="#c0c0c0"/><rect x="11" y="9" width="2" height="1" fill="#000"/><rect x="13" y="9" width="1" height="1" fill="#c0c0c0"/><rect x="14" y="9" width="1" height="1" fill="#000"/><rect x="0" y="10" width="1" height="1" fill="#000"/><rect x="1" y="10" width="5" height="1" fill="#c0c0c0"/><rect x="6" y="10" width="3" height="1" fill="#f0e000"/><rect x="9" y="10" width="2" height="1" fill="#c0c0c0"/><rect x="11" y="10" width="1" height="1" fill="#000"/><rect x="12" y="10" width="1" height="1" fill="#c0c0c0"/><rect x="13" y="10" width="2" height="1" fill="#000"/><rect x="0" y="11" width="14" height="1" fill="#000"/><rect x="1" y="12" width="1" height="1" fill="#000"/><rect x="2" y="12" width="9" height="1" fill="#fff"/><rect x="11" y="12" width="2" height="1" fill="#000"/><rect x="1" y="13" width="11" height="1" fill="#000"/></svg>
<svg style="left:286px;top:692px" width="16" height="16"><path d="M.5 .5h8l3 3v11h-11z" fill="#fff" stroke="#000"/><path d="M8.5 .5v3h3" fill="none" stroke="#000"/><circle cx="9.5" cy="8.5" r="3.3" fill="#a8e8f0" stroke="#303030" stroke-width="1.2"/><path d="M12 11l3 3.5" stroke="#202020" stroke-width="1.8"/></svg>
<svg style="left:309px;top:693px" width="16" height="15"><text x="1" y="5" font-family="Liberation Sans,sans-serif" font-size="6" fill="#808080" textLength="12" lengthAdjust="spacingAndGlyphs">АБВ</text><path d="M2.500 10.500l3.200 3L14 3.500" fill="none" stroke="#808080" stroke-width="1.300"/></svg>
<svg style="left:340px;top:692px" width="11" height="15"><path d="M3 0.5L6.2 9M8 0.5L4.8 9" fill="none" stroke="#808080" stroke-width="1.1"/><ellipse cx="2.6" cy="11.6" rx="1.9" ry="2.4" fill="none" stroke="#808080"/><ellipse cx="8.4" cy="11.6" rx="1.9" ry="2.4" fill="none" stroke="#808080"/></svg>
<svg style="left:361px;top:692px" width="16" height="16"><path d="M.5 1.5h5l2 2v7h-7z" fill="#fff" stroke="#000"/><path d="M2 4.5h3M2 6.5h4M2 8.5h4" stroke="#000" stroke-width="1"/><path d="M6.5 4.5h6l2 2v8h-8z" fill="#fff" stroke="#2020a0"/><path d="M8 8.5h5M8 10.5h5M8 12.5h5" stroke="#000" stroke-width="1"/></svg>
<svg style="left:384px;top:692px" width="17" height="15"><rect x=".5" y="1.5" width="13" height="12" rx="1.5" fill="#858585" stroke="#808080"/><rect x="4" y="0" width="6" height="3" rx="1" fill="#858585"/><rect x="5" y="1.6" width="4" height="1" fill="#c8c5be"/><rect x="7.5" y="7.5" width="8" height="6" fill="#d8d5ce" stroke="#808080"/><path d="M9 10h5M9 12h5" stroke="#808080" stroke-width="1"/></svg>
<svg style="left:415px;top:695px" width="13" height="9"><path d="M3.5 4.2C6 .6 11.6 .8 11.6 4.4 11.6 7 9.6 8 8 8" fill="none" stroke="#808080" stroke-width="1.3"/><path d="M0 2l5.2 .6L1.6 6.6z" fill="#808080"/></svg>
<svg style="left:442px;top:692px" width="16" height="16"><text x="1" y="7.500" font-family="Liberation Serif,serif" font-weight="bold" font-size="9" fill="#2828c0">А</text><text x="1" y="15" font-family="Liberation Serif,serif" font-weight="bold" font-size="9" fill="#b02828">Я</text><path d="M12 1h1v10h2l-2.500 3.500L10 11h2z" fill="#303030"/></svg>
<svg style="left:465px;top:692px" width="16" height="16"><text x="1" y="7.500" font-family="Liberation Serif,serif" font-weight="bold" font-size="9" fill="#b02828">Я</text><text x="1" y="15" font-family="Liberation Serif,serif" font-weight="bold" font-size="9" fill="#2828c0">А</text><path d="M12 1h1v10h2l-2.500 3.500L10 11h2z" fill="#303030"/></svg>
<svg style="left:494px;top:692px" width="17" height="16"><path d="M.5 .5h10L6.5 5v4h-2V5z" fill="#fff" stroke="#000" stroke-width="1"/><path d="M2 1.2h7L5.5 4.4z" fill="#30b0c0"/><path d="M15 4l-6 5h3l-4 6 8-6.5h-3.4l3.4-4.5z" fill="#f0e820" stroke="#404000" stroke-width=".7"/></svg>
<svg style="left:517px;top:692px" width="17" height="16"><path d="M.5 .5h10L6.5 5v4h-2V5z" fill="#fff" stroke="#000" stroke-width="1"/><path d="M2 1.2h7L5.5 4.4z" fill="#30b0c0"/><rect x="5.5" y="4.5" width="10" height="11" fill="#fff" stroke="#000"/><rect x="6" y="4" width="10" height="2" fill="#3030b0"/><rect x="11.5" y="8" width="2.6" height="2.6" fill="none" stroke="#000" stroke-width=".9"/><rect x="11.5" y="11.6" width="2.6" height="2.6" fill="none" stroke="#000" stroke-width=".9"/><path d="M7 9.3h3M7 12.9h3" stroke="#000" stroke-width="1"/></svg>
<svg style="left:541px;top:693px" width="15" height="12"><path d="M.5 .5h13L8.5 6.5v5h-3v-5z" fill="none" stroke="#888" stroke-width="1"/></svg>
<svg style="left:563px;top:692px" width="17" height="16"><path d="M.5 .5h10L6.5 5v3h-2V5z" fill="none" stroke="#888" stroke-width="1"/><rect x="5.5" y="4.5" width="10" height="11" fill="#d8d5ce" stroke="#888"/><rect x="11.5" y="7.5" width="2.6" height="2.6" fill="none" stroke="#888" stroke-width=".9"/><rect x="11.5" y="11.5" width="2.6" height="2.6" fill="none" stroke="#888" stroke-width=".9"/><path d="M0 11h3v-2l3 3.2-3 3.2v-2H0z" fill="#888"/></svg>
<svg style="left:592px;top:693px" width="15" height="13"><path d="M2 3.5L3.5 0h2.6L7 3.5V12H0V7z" fill="#000"/><path d="M8 3.5L8.9 0h2.6L13 3.5 15 7v5H8z" fill="#000"/><rect x="6" y="3" width="3" height="3.5" fill="#000"/><rect x="1.6" y="7" width="1.4" height="3.6" fill="#d8d5ce"/><rect x="9.6" y="7" width="1.4" height="3.6" fill="#d8d5ce"/></svg>
<svg style="left:621px;top:694px" width="15" height="11"><path d="M0 0l5 5.5-5 5.5z" fill="#888"/><path d="M10.5 2v7M7.2 5.5h6.6M8.2 3.2l4.6 4.6M12.8 3.2l-4.6 4.6" stroke="#888" stroke-width="1"/></svg>
<svg style="left:643px;top:693px" width="15" height="12"><path d="M0 .5l5 5.5-5 5.500z" fill="#888"/><path d="M5.5 1.500l8 10M14 0.500L6 11.500" stroke="#888" stroke-width="2"/></svg>
<svg style="left:673px;top:692px" width="16" height="15"><rect x="3.500" y=".5" width="12" height="10" fill="#fff" stroke="#303030"/><rect x="4" y="1" width="11" height="2" fill="#3030a8"/><rect x=".5" y="4.500" width="12" height="10" fill="#fff" stroke="#303030"/><rect x="1" y="5" width="11" height="2" fill="#3030a8"/><path d="M2 9h9M2 11h9M2 13h9M5 8v6" stroke="#606060" stroke-width=".8"/></svg>
<svg style="left:695px;top:692px" width="17" height="16"><rect x="4.500" y="5.500" width="11" height="9.500" fill="#fff" stroke="#303030"/><rect x="5" y="6" width="10" height="2" fill="#3030a8"/><path d="M6 10.500h9M6 12.700h9M8.500 9v6M11.500 9v6" stroke="#404040" stroke-width=".8"/><path d="M3.500 0v7M0 3.500h7M1 1l5 5M6 1L1 6" stroke="#e8d820" stroke-width="1"/></svg>
<svg style="left:718px;top:699px" width="5" height="3"><path d="M0 0h5L2.5 3z" fill="#000"/></svg>
<svg style="left:738px;top:692px" width="14" height="16"><path d="M.5 .5h12v11h-3l1.500 3.500-4.500-3.500h-6z" fill="#ffffc8" stroke="#303030"/><text x="3.200" y="10" font-family="Liberation Sans,sans-serif" font-weight="bold" font-size="10.500" fill="#2020a0">?</text></svg>
<div style="left:9px;top:721px;width:741px;height:16px;border:1px solid #e0ddd6;background:#d6d2cb"></div>
<div class="t" style="left:9.5px;top:723px;transform-origin:0 0;transform:scaleX(0.9610);">Режим таблицы</div>
<div style="left:768px;top:721px;width:31px;height:16px;border:1px solid #e0ddd6"></div>
<div style="left:802px;top:721px;width:25px;height:16px;border:1px solid #e0ddd6"></div>
<div style="left:830px;top:721px;width:25px;height:16px;border:1px solid #e0ddd6"></div>
<div style="left:858px;top:721px;width:30px;height:16px;border:1px solid #e0ddd6"></div>
<div style="left:891px;top:721px;width:32px;height:16px;border:1px solid #e0ddd6"></div>
<div style="left:926px;top:721px;width:27px;height:16px;border:1px solid #e0ddd6"></div>
<div style="left:955px;top:721px;width:29px;height:16px;border:1px solid #e0ddd6"></div>
<div style="left:987px;top:721px;width:29px;height:16px;border:1px solid #e0ddd6"></div>
<div style="left:0px;top:739px;width:1024px;height:1px;background:#fff"></div>
<div class="raised" style="left:2px;top:742px;width:51px;height:22px;"></div>
<svg style="left:4px;top:745px" width="15" height="14"><path d="M1.800 1.800q2.600-2 5.400-.4l-1.200 4.800q-2.700-1.500-5.400 .5z" fill="#e04a24"/><path d="M8 1.700q2.700 1.400 5.800-.7l-1.200 4.900q-2.900 1.900-5.800 .6z" fill="#6cb42c"/><path d="M.3 7.700q2.700-2 5.400-.5l-1.200 4.900q-2.700-1.500-5.400 .5z" fill="#2c60d4"/><path d="M6.500 7.600q2.900 1.400 5.800-.6l-1.200 4.900q-2.900 1.900-5.800 .6z" fill="#f0bc18"/></svg>
<div class="tb" style="left:21.5px;top:747px;transform-origin:0 0;transform:scaleX(1.0246);">Пуск</div>
<svg style="left:61px;top:746px" width="16" height="16"><rect x="0" y="0" width="16" height="16" fill="#7c7c10"/><circle cx="8" cy="8" r="5.200" fill="none" stroke="#f4f4e0" stroke-width="1.700"/><path d="M8 5v3.500h3" fill="none" stroke="#f4f4e0" stroke-width="1.400"/><path d="M1.500 4v-2.500h2.500M12 1.500h2.500v2.500M14.500 12v2.500h-2.500M4 14.500h-2.500v-2.500" fill="none" stroke="#f4f4e0" stroke-width="1"/></svg>
<svg style="left:84px;top:746px" width="16" height="16"><text x="1.500" y="14.500" font-family="Liberation Sans,sans-serif" font-weight="bold" font-size="19" fill="#2a7ad4" stroke="#2a7ad4" stroke-width=".6">e</text><path d="M1.500 12.500C-1 9 4 3 13.500 1.200 16 1 16 3 14.500 5" fill="none" stroke="#58b0f0" stroke-width="1.300"/></svg>
<svg style="left:107px;top:746px" width="15" height="15"><path d="M7.500 7.500L7.500 0A7.500 7.500 0 0 1 15 7.500z" fill="#58b030"/><path d="M7.500 7.500L15 7.500A7.500 7.500 0 0 1 7.500 15z" fill="#e8a020"/><path d="M7.500 7.500L7.500 15A7.500 7.500 0 0 1 0 7.500z" fill="#3870d0"/><path d="M7.500 7.500L0 7.500A7.500 7.500 0 0 1 7.500 0z" fill="#e05028"/><circle cx="7.500" cy="7.500" r="4.300" fill="#f4f4f4"/><path d="M6 5l4 2.500-4 2.500z" fill="#202020"/></svg>
<div class="tb" style="left:134.5px;top:741px;font-size:14px;transform-origin:0 0;transform:scaleX(1.1056);">»</div>
<div class="raised" style="left:147px;top:742px;width:160px;height:22px;"></div>
<div class="t" style="left:170.5px;top:747px;transform-origin:0 0;transform:scaleX(0.9822);">Norton AntiVirus Corpora...</div>
<div class="raised" style="left:310px;top:742px;width:160px;height:22px;"></div>
<div class="t" style="left:333.5px;top:747px;transform-origin:0 0;transform:scaleX(0.9907);">Диплом бюджетирован...</div>
<div style="left:473px;top:742px;width:160px;height:22px;background:repeating-conic-gradient(#fff 0 25%,#d4d0c8 0 50%) 0 0/2px 2px;box-shadow:inset 1px 1px 0 #404040,inset -1px -1px 0 #fff,inset 2px 2px 0 #808080"></div>
<div class="tb" style="left:497.5px;top:748px;transform-origin:0 0;transform:scaleX(0.9822);">BOSS [20.05.03] V 187</div>
<svg style="left:152px;top:746px" width="14" height="14"><path d="M.5 8.500L8 .5l5.500 3.500-7.500 9.500-5.500-1z" fill="#f0e878" stroke="#404000" stroke-width="1"/><path d="M3 9l6-6" stroke="#808020" stroke-width="1"/><circle cx="7.500" cy="6.500" r="1.800" fill="#2030d0"/></svg>
<svg style="left:314px;top:745px" width="16" height="17"><path d="M4.500 .5h8l3 3v13h-11z" fill="#fff" stroke="#404040"/><path d="M7 9h7M7 11h7M7 13h7" stroke="#a0a0a0" stroke-width="1"/><rect x=".5" y="3.500" width="10" height="8" fill="#fff" stroke="#2020a0" stroke-width="1"/><text x="1.200" y="10.500" font-family="Liberation Sans,sans-serif" font-weight="bold" font-size="9" fill="#1818a0" stroke="#1818a0" stroke-width=".5">W</text></svg>
<svg style="left:478px;top:746px" width="16" height="16" viewBox="0 0 16 16" shape-rendering="crispEdges"><rect x="0" y="0" width="16" height="1" fill="#95004a"/><rect x="0" y="1" width="16" height="1" fill="#95004a"/><rect x="0" y="2" width="2" height="1" fill="#95004a"/><rect x="2" y="2" width="12" height="1" fill="#fff"/><rect x="14" y="2" width="2" height="1" fill="#95004a"/><rect x="0" y="3" width="2" height="1" fill="#95004a"/><rect x="2" y="3" width="6" height="1" fill="#fff"/><rect x="8" y="3" width="4" height="1" fill="#8a0a3a"/><rect x="12" y="3" width="2" height="1" fill="#fff"/><rect x="14" y="3" width="2" height="1" fill="#95004a"/><rect x="0" y="4" width="2" height="1" fill="#95004a"/><rect x="2" y="4" width="5" height="1" fill="#fff"/><rect x="7" y="4" width="6" height="1" fill="#8a0a3a"/><rect x="13" y="4" width="1" height="1" fill="#fff"/><rect x="14" y="4" width="2" height="1" fill="#95004a"/><rect x="0" y="5" width="2" height="1" fill="#95004a"/><rect x="2" y="5" width="5" height="1" fill="#fff"/><rect x="7" y="5" width="4" height="1" fill="#8a0a3a"/><rect x="11" y="5" width="1" height="1" fill="#fff"/><rect x="12" y="5" width="2" height="1" fill="#8a0a3a"/><rect x="14" y="5" width="2" height="1" fill="#95004a"/><rect x="0" y="6" width="2" height="1" fill="#95004a"/><rect x="2" y="6" width="4" height="1" fill="#fff"/><rect x="6" y="6" width="8" height="1" fill="#8a0a3a"/><rect x="14" y="6" width="2" height="1" fill="#95004a"/><rect x="0" y="7" width="2" height="1" fill="#95004a"/><rect x="2" y="7" width="4" height="1" fill="#fff"/><rect x="6" y="7" width="8" height="1" fill="#8a0a3a"/><rect x="14" y="7" width="2" height="1" fill="#95004a"/><rect x="0" y="8" width="2" height="1" fill="#95004a"/><rect x="2" y="8" width="3" height="1" fill="#fff"/><rect x="5" y="8" width="6" height="1" fill="#8a0a3a"/><rect x="11" y="8" width="1" height="1" fill="#fff"/><rect x="12" y="8" width="1" height="1" fill="#8a0a3a"/><rect x="13" y="8" width="1" height="1" fill="#fff"/><rect x="14" y="8" width="2" height="1" fill="#95004a"/><rect x="0" y="9" width="2" height="1" fill="#95004a"/><rect x="2" y="9" width="2" height="1" fill="#fff"/><rect x="4" y="9" width="4" height="1" fill="#8a0a3a"/><rect x="8" y="9" width="3" height="1" fill="#fff"/><rect x="11" y="9" width="2" height="1" fill="#8a0a3a"/><rect x="13" y="9" width="1" height="1" fill="#fff"/><rect x="14" y="9" width="2" height="1" fill="#95004a"/><rect x="0" y="10" width="2" height="1" fill="#95004a"/><rect x="2" y="10" width="1" height="1" fill="#fff"/><rect x="3" y="10" width="3" height="1" fill="#8a0a3a"/><rect x="6" y="10" width="2" height="1" fill="#fff"/><rect x="8" y="10" width="4" height="1" fill="#8a0a3a"/><rect x="12" y="10" width="2" height="1" fill="#fff"/><rect x="14" y="10" width="2" height="1" fill="#95004a"/><rect x="0" y="11" width="2" height="1" fill="#95004a"/><rect x="2" y="11" width="1" height="1" fill="#fff"/><rect x="3" y="11" width="2" height="1" fill="#8a0a3a"/><rect x="5" y="11" width="2" height="1" fill="#fff"/><rect x="7" y="11" width="3" height="1" fill="#8a0a3a"/><rect x="10" y="11" width="4" height="1" fill="#fff"/><rect x="14" y="11" width="2" height="1" fill="#95004a"/><rect x="0" y="12" width="2" height="1" fill="#95004a"/><rect x="2" y="12" width="1" height="1" fill="#fff"/><rect x="3" y="12" width="1" height="1" fill="#8a0a3a"/><rect x="4" y="12" width="1" height="1" fill="#fff"/><rect x="5" y="12" width="3" height="1" fill="#8a0a3a"/><rect x="8" y="12" width="6" height="1" fill="#fff"/><rect x="14" y="12" width="2" height="1" fill="#95004a"/><rect x="0" y="13" width="2" height="1" fill="#95004a"/><rect x="2" y="13" width="1" height="1" fill="#fff"/><rect x="3" y="13" width="4" height="1" fill="#8a0a3a"/><rect x="7" y="13" width="7" height="1" fill="#fff"/><rect x="14" y="13" width="2" height="1" fill="#95004a"/><rect x="0" y="14" width="16" height="1" fill="#95004a"/><rect x="0" y="15" width="16" height="1" fill="#95004a"/></svg>
<div style="left:936px;top:746px;width:16px;height:16px;background:#0a246a"></div>
<div class="t" style="left:936.5px;top:748px;transform-origin:0 0;transform:scaleX(0.9519);color:#fff">EN</div>
<div style="left:956px;top:742px;width:1px;height:24px;background:#808080"></div>
<div style="left:957px;top:742px;width:1px;height:24px;background:#fff"></div>
<div class="sunk" style="left:963px;top:742px;width:59px;height:24px;"></div>
<div class="tb" style="left:967.5px;top:746px;font-size:14px;transform-origin:0 0;transform:scaleX(1.1056);">«</div>
<div class="t" style="left:985.5px;top:748px;transform-origin:0 0;transform:scaleX(0.9819);">18:14</div>
</div></body></html>
